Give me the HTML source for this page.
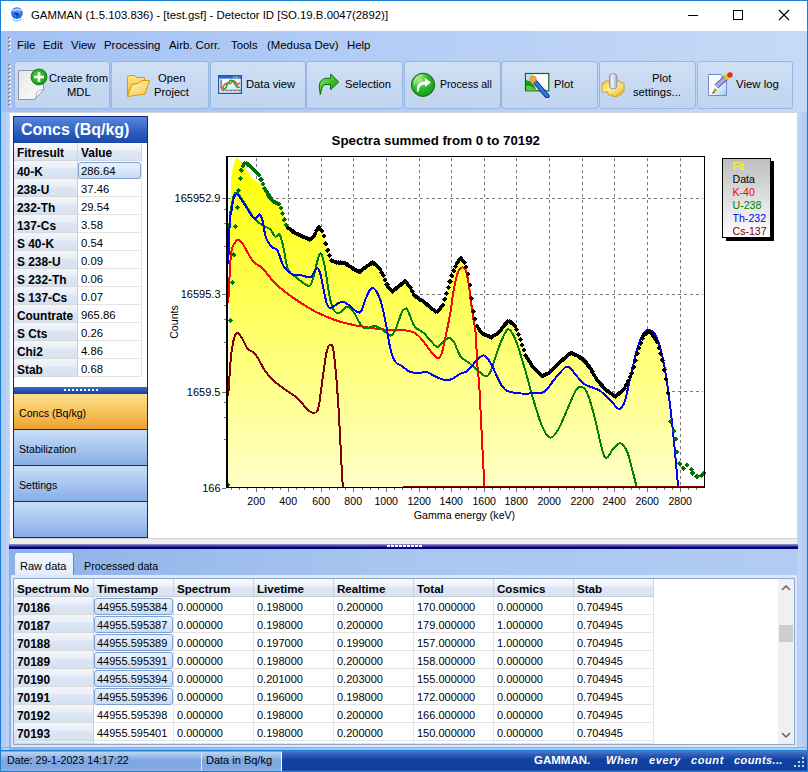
<!DOCTYPE html>
<html><head><meta charset="utf-8"><style>
*{box-sizing:border-box;margin:0;padding:0}
html,body{width:808px;height:772px;overflow:hidden;background:#fff}
body{position:relative;font-family:"Liberation Sans", sans-serif;color:#000}
.a{position:absolute}
.t{position:absolute;white-space:nowrap;line-height:1}
</style></head><body>
<!-- window frame -->
<div class="a" style="left:0;top:0;width:808px;height:772px;background:#1A7ED4"></div>
<div class="a" style="left:1px;top:1px;width:806px;height:30px;background:#fff"></div>
<!-- menu + toolbar bg -->
<div class="a" style="left:1px;top:31px;width:806px;height:81px;background:linear-gradient(90deg,#A3C1F4,#C6DAF7)"></div>

<svg class="a" style="left:10px;top:7px" width="14" height="15" viewBox="0 0 14 15">
<defs><radialGradient id="gl" cx="0.5" cy="0.45" r="0.6"><stop offset="0" stop-color="#7AB8FF"/><stop offset="0.6" stop-color="#2A78F0"/><stop offset="1" stop-color="#0C50D8"/></radialGradient></defs>
<circle cx="6.9" cy="6.1" r="5.8" fill="url(#gl)"/>
<path d="M2.5,4 Q7,0.5 11.5,4" stroke="#DDEEFF" stroke-width="1.3" fill="none" opacity="0.9"/>
<path d="M4,5.5 L7.5,5.5 L9,7.5 L7.5,10.5 L6.5,8 L4.5,7.5 Z" fill="#0A2FA0"/>
<path d="M2,12 Q7,15.8 12,12" stroke="#9CCCF8" stroke-width="1.5" fill="none"/>
</svg>
<div class="t" style="left:31px;top:10px;font-size:11.4px;color:#000">GAMMAN (1.5.103.836) - [test.gsf] - Detector ID [SO.19.B.0047(2892)]</div>
<div class="a" style="left:688px;top:15px;width:10px;height:1px;background:#000"></div>
<div class="a" style="left:733px;top:10px;width:10px;height:10px;border:1px solid #000"></div>
<svg class="a" style="left:778px;top:9px" width="12" height="12"><path d="M1,1 L11,11 M11,1 L1,11" stroke="#000" stroke-width="1.1"/></svg>

<div class="a" style="left:8px;top:37px;width:2px;height:2px;background:#9A9288;box-shadow:1px 1px 0 #fff"></div><div class="a" style="left:8px;top:41px;width:2px;height:2px;background:#9A9288;box-shadow:1px 1px 0 #fff"></div><div class="a" style="left:8px;top:45px;width:2px;height:2px;background:#9A9288;box-shadow:1px 1px 0 #fff"></div><div class="a" style="left:8px;top:49px;width:2px;height:2px;background:#9A9288;box-shadow:1px 1px 0 #fff"></div>
<div class="t" style="left:17px;top:40px;font-size:11.4px">File</div>
<div class="t" style="left:43px;top:40px;font-size:11.4px">Edit</div>
<div class="t" style="left:71px;top:40px;font-size:11.4px">View</div>
<div class="t" style="left:104px;top:40px;font-size:11.4px">Processing</div>
<div class="t" style="left:169px;top:40px;font-size:11.4px">Airb. Corr.</div>
<div class="t" style="left:231px;top:40px;font-size:11.4px">Tools</div>
<div class="t" style="left:267px;top:40px;font-size:11.4px">(Medusa Dev)</div>
<div class="t" style="left:347px;top:40px;font-size:11.4px">Help</div>
<div class="a" style="left:8px;top:64px;width:2px;height:2px;background:#9A9288;box-shadow:1px 1px 0 #fff"></div><div class="a" style="left:8px;top:68px;width:2px;height:2px;background:#9A9288;box-shadow:1px 1px 0 #fff"></div><div class="a" style="left:8px;top:72px;width:2px;height:2px;background:#9A9288;box-shadow:1px 1px 0 #fff"></div><div class="a" style="left:8px;top:76px;width:2px;height:2px;background:#9A9288;box-shadow:1px 1px 0 #fff"></div><div class="a" style="left:8px;top:80px;width:2px;height:2px;background:#9A9288;box-shadow:1px 1px 0 #fff"></div><div class="a" style="left:8px;top:84px;width:2px;height:2px;background:#9A9288;box-shadow:1px 1px 0 #fff"></div><div class="a" style="left:8px;top:88px;width:2px;height:2px;background:#9A9288;box-shadow:1px 1px 0 #fff"></div><div class="a" style="left:8px;top:92px;width:2px;height:2px;background:#9A9288;box-shadow:1px 1px 0 #fff"></div><div class="a" style="left:8px;top:96px;width:2px;height:2px;background:#9A9288;box-shadow:1px 1px 0 #fff"></div><div class="a" style="left:8px;top:100px;width:2px;height:2px;background:#9A9288;box-shadow:1px 1px 0 #fff"></div><div class="a" style="left:8px;top:104px;width:2px;height:2px;background:#9A9288;box-shadow:1px 1px 0 #fff"></div>
<div class="a" style="left:14px;top:61px;width:96px;height:48px;border:1px solid #98B6E2;border-radius:3px;background:linear-gradient(#CFE0F4,#C6D9F2 50%,#C2D5F0)"></div>
<div class="a" style="left:111px;top:61px;width:98px;height:48px;border:1px solid #98B6E2;border-radius:3px;background:linear-gradient(#CFE0F4,#C6D9F2 50%,#C2D5F0)"></div>
<div class="a" style="left:210px;top:61px;width:96px;height:48px;border:1px solid #98B6E2;border-radius:3px;background:linear-gradient(#CFE0F4,#C6D9F2 50%,#C2D5F0)"></div>
<div class="a" style="left:306px;top:61px;width:97px;height:48px;border:1px solid #98B6E2;border-radius:3px;background:linear-gradient(#CFE0F4,#C6D9F2 50%,#C2D5F0)"></div>
<div class="a" style="left:404px;top:61px;width:97px;height:48px;border:1px solid #98B6E2;border-radius:3px;background:linear-gradient(#CFE0F4,#C6D9F2 50%,#C2D5F0)"></div>
<div class="a" style="left:501px;top:61px;width:97px;height:48px;border:1px solid #98B6E2;border-radius:3px;background:linear-gradient(#CFE0F4,#C6D9F2 50%,#C2D5F0)"></div>
<div class="a" style="left:599px;top:61px;width:97px;height:48px;border:1px solid #98B6E2;border-radius:3px;background:linear-gradient(#CFE0F4,#C6D9F2 50%,#C2D5F0)"></div>
<div class="a" style="left:697px;top:61px;width:96px;height:48px;border:1px solid #98B6E2;border-radius:3px;background:linear-gradient(#CFE0F4,#C6D9F2 50%,#C2D5F0)"></div>

<svg class="a" style="left:17px;top:66px" width="32" height="36" viewBox="0 0 32 36">
<defs><linearGradient id="pg" x1="0" y1="0" x2="1" y2="1"><stop offset="0" stop-color="#E6E6E6"/><stop offset="1" stop-color="#FFFFFF"/></linearGradient>
<radialGradient id="gc" cx="0.45" cy="0.45" r="0.6"><stop offset="0" stop-color="#6AE050"/><stop offset="0.7" stop-color="#1EAA1E"/><stop offset="1" stop-color="#0C8A0C"/></radialGradient></defs>
<path d="M1.5,4.5 L26.5,4.5 L26.5,24 L17.5,33.5 L1.5,33.5 Z" fill="url(#pg)" stroke="#8894A8" stroke-width="1"/>
<path d="M26.5,24 Q22,22.5 19.5,27 Q20,30 17.5,33.5 Z" fill="#FAFAFA" stroke="#9098A8" stroke-width="0.8"/>
<circle cx="22" cy="11" r="8" fill="url(#gc)" stroke="#0A7A0A" stroke-width="0.8"/>
<path d="M22,6 L22,16 M17,11 L27,11" stroke="#fff" stroke-width="2.4"/>
</svg>
<div class="t" style="left:49px;top:73px;font-size:11.2px">Create from</div>
<div class="t" style="left:67px;top:87px;font-size:11.2px">MDL</div>

<svg class="a" style="left:125px;top:73px" width="27" height="25" viewBox="0 0 27 25">
<defs><linearGradient id="fo" x1="0" y1="0" x2="1" y2="1"><stop offset="0" stop-color="#FFF6B8"/><stop offset="1" stop-color="#F4C850"/></linearGradient>
<linearGradient id="fob" x1="0" y1="0" x2="0" y2="1"><stop offset="0" stop-color="#FFE680"/><stop offset="1" stop-color="#F0B848"/></linearGradient></defs>
<path d="M2.5,23 L2.5,4.5 Q2.5,2.5 4.5,2.5 L9.5,2.5 L11.5,4.5 L19.5,4.5 L19.5,9 L7,11.5 Z" fill="url(#fob)" stroke="#DC9A08" stroke-width="1"/>
<path d="M2.5,23.5 L7,11.5 Q13,11.5 17,7.5 L24.5,7.5 L20,21 Z" fill="url(#fo)" stroke="#DC9A08" stroke-width="1"/>
</svg>
<div class="t" style="left:158px;top:73px;font-size:11.2px">Open</div>
<div class="t" style="left:154px;top:87px;font-size:11.2px">Project</div>

<svg class="a" style="left:218px;top:75px" width="24" height="19" viewBox="0 0 24 19">
<defs><linearGradient id="dv" x1="0" y1="0" x2="1" y2="1"><stop offset="0" stop-color="#FFFFFF"/><stop offset="1" stop-color="#CDE6FA"/></linearGradient></defs>
<rect x="0.6" y="0.6" width="22.8" height="17.8" fill="url(#dv)" stroke="#2450B0" stroke-width="1.2"/>
<rect x="1" y="1" width="22" height="2.6" fill="#2C66C8"/>
<rect x="15.5" y="1.4" width="1.4" height="1.8" fill="#9CC8F0"/><rect x="18" y="1.4" width="1.4" height="1.8" fill="#9CC8F0"/><rect x="20.5" y="1.4" width="1.4" height="1.8" fill="#F06030"/>
<path d="M3.3,4.5 L3.3,15.2 L23,15.2" stroke="#707070" stroke-width="1" fill="none"/>
<path d="M2,6 L3.3,6 M2,8 L3.3,8 M2,10 L3.3,10 M2,12 L3.3,12 M5,15.2 L5,16.5 M9,15.2 L9,16.5 M13,15.2 L13,16.5 M17,15.2 L17,16.5 M21,15.2 L21,16.5" stroke="#606060" stroke-width="0.9"/>
<path d="M4.3,14 Q6,9 8,8.5 L12.6,8.5 Q14,6 16.2,6 L19.8,9.7 L21.7,7.7" stroke="#F04A20" stroke-width="1.4" fill="none"/>
<path d="M5,14.4 L8,12.8 Q9,9 10,8 L12.6,5.3 L14.6,5.7 L19,12 L21.7,12.4" stroke="#10A020" stroke-width="1.4" fill="none"/>
</svg>
<div class="t" style="left:246px;top:79px;font-size:11.2px">Data view</div>

<svg class="a" style="left:317px;top:73px" width="23" height="23" viewBox="0 0 23 23">
<defs><linearGradient id="ag" x1="0" y1="0" x2="1" y2="1"><stop offset="0" stop-color="#90F070"/><stop offset="0.5" stop-color="#40C030"/><stop offset="1" stop-color="#159015"/></linearGradient></defs>
<path d="M3.3,21.5 L2.2,13 Q3,6 9.3,5.2 L13.7,5.2 L13.7,1.1 L21.7,8.9 L13.7,16.7 L13.5,11.5 L8.1,11.5 Q5,12.5 4.8,15.6 Z" fill="url(#ag)" stroke="#0A6A0A" stroke-width="1"/>
</svg>
<div class="t" style="left:345px;top:79px;font-size:11.2px">Selection</div>

<svg class="a" style="left:410px;top:72px" width="26" height="26" viewBox="0 0 26 26">
<defs><radialGradient id="pa" cx="0.35" cy="0.3" r="0.8"><stop offset="0" stop-color="#A8F090"/><stop offset="0.5" stop-color="#2CB82C"/><stop offset="1" stop-color="#169A16"/></radialGradient></defs>
<circle cx="13" cy="12.8" r="11.6" fill="url(#pa)" stroke="#0A640A" stroke-width="1"/>
<path d="M4.5,12 Q5,4 13,3" stroke="#D8F8C8" stroke-width="1.2" fill="none" opacity="0.8"/>
<path d="M6.8,19.5 Q5.5,10 15,9.5 L15,6 L21,10.5 L15,15 L15,12.5 Q9,12 8.8,19.5 Z" fill="#fff"/>
</svg>
<div class="t" style="left:440px;top:79px;font-size:10.6px">Process all</div>

<svg class="a" style="left:524px;top:72px" width="26" height="26" viewBox="0 0 26 26">
<defs><linearGradient id="sh" x1="0" y1="0" x2="1" y2="0"><stop offset="0" stop-color="#FFFFFF"/><stop offset="0.6" stop-color="#FFFFFF"/><stop offset="1" stop-color="#B8B8B8"/></linearGradient></defs>
<rect x="1.5" y="1.5" width="23.3" height="17.3" fill="#fff" stroke="#0A6A1A" stroke-width="1.2"/>
<path d="M2,2 L10,2 L7,9 L2,8 Z" fill="#B8E2FA"/>
<path d="M2,18.5 L2,8 Q9,9 13,18.5 Z" fill="#14961A"/>
<path d="M2,18.5 L2,14 Q8,13 13,18.5 Z" fill="#64C234"/>
<path d="M14,6 Q20,10 22,18 L17,18 Z" fill="url(#sh)" opacity="0.6"/>
<path d="M12,11 L23,24" stroke="#0A2A9A" stroke-width="5" stroke-linecap="round"/>
<path d="M12,11 L23,24" stroke="#3A78E0" stroke-width="2.8" stroke-linecap="round"/>
<circle cx="9" cy="7.2" r="3.3" fill="#F4A838" stroke="#D88010" stroke-width="0.6"/>
</svg>
<div class="t" style="left:554px;top:79px;font-size:11.2px">Plot</div>

<svg class="a" style="left:601px;top:72px" width="24" height="26" viewBox="0 0 24 26">
<defs><linearGradient id="cy" x1="0" y1="0" x2="1" y2="0"><stop offset="0" stop-color="#B8B8B8"/><stop offset="0.35" stop-color="#F4F4F4"/><stop offset="1" stop-color="#A8A8D0"/></linearGradient>
<linearGradient id="ge" x1="0" y1="0" x2="1" y2="1"><stop offset="0" stop-color="#F0C830"/><stop offset="0.45" stop-color="#FFF0A0"/><stop offset="1" stop-color="#E8B010"/></linearGradient></defs>
<path d="M4,9 L19,9 L19,11 L23,11 L23,20 L20,20 L20,23 L16,23 L16,24.5 L12,24.5 L12,23 L7,23 L7,20 L1,20 L1,11 L4,11 Z" fill="url(#ge)" stroke="#D0A010" stroke-width="0.9"/>
<rect x="8.5" y="1.5" width="7.5" height="15.5" rx="3.6" fill="url(#cy)" stroke="#8A8A8A" stroke-width="0.8"/>
</svg>
<div class="t" style="left:652px;top:73px;font-size:11.2px">Plot</div>
<div class="t" style="left:633px;top:87px;font-size:11.2px">settings...</div>

<svg class="a" style="left:707px;top:72px" width="27" height="26" viewBox="0 0 27 26">
<defs><linearGradient id="vl" x1="0" y1="0" x2="1" y2="1"><stop offset="0" stop-color="#FFFFFF"/><stop offset="0.5" stop-color="#F4FAFF"/><stop offset="1" stop-color="#90CCF0"/></linearGradient></defs>
<path d="M1.5,2.5 L14,2.5 L19.5,8 L19.5,23.5 L1.5,23.5 Z" fill="url(#vl)" stroke="#7A88D0" stroke-width="1"/>
<path d="M14,2.5 L14,8 L19.5,8 Z" fill="#80C8F0"/>
<path d="M9.4,14.2 L19.4,5.5" stroke="#505090" stroke-width="5.4" stroke-linecap="butt"/>
<path d="M9.4,14.2 L19.4,5.5" stroke="#A8A8E8" stroke-width="3.6" stroke-linecap="butt"/>
<path d="M5.5,21.5 L7.5,16 L10.5,18.5 Z" fill="#D89810"/>
<path d="M5.2,21.8 L6.2,19.5 L7.8,20.8 Z" fill="#202020"/>
<path d="M18.2,6.5 L21.8,3.3" stroke="#F0C010" stroke-width="5"/>
<circle cx="23" cy="2.9" r="2.7" fill="#E03010"/>
</svg>
<div class="t" style="left:736px;top:79px;font-size:11.4px">View log</div>


<div class="a" style="left:1px;top:112px;width:9px;height:638px;background:linear-gradient(90deg,#AFC9F4,#C0D6F7)"></div>
<div class="a" style="left:798px;top:112px;width:9px;height:638px;background:linear-gradient(90deg,#C0D6F7,#AFC9F4)"></div>
<div class="a" style="left:9px;top:112px;width:789px;height:432px;background:#fff;border-top:1px solid #D8D8D8;border-left:1px solid #D8D8D8;border-right:1px solid #D8D8D8"></div>
<div class="a" style="left:10px;top:538px;width:787px;height:6px;background:#EEEEEE;border-top:1px solid #D0D0D0"></div>

<svg width="808" height="772" style="position:absolute;left:0;top:0"><defs><linearGradient id="yg" gradientUnits="userSpaceOnUse" x1="0" y1="157" x2="0" y2="487"><stop offset="0" stop-color="#FFFF00"/><stop offset="1" stop-color="#FFFFC8"/></linearGradient><linearGradient id="lg" x1="0" y1="0" x2="0" y2="1"><stop offset="0" stop-color="#BEBEBE"/><stop offset="1" stop-color="#FFFFFF"/></linearGradient></defs><path d="M256.5,158 L256.5,486 M288.5,158 L288.5,486 M321.5,158 L321.5,486 M353.5,158 L353.5,486 M386.5,158 L386.5,486 M419.5,158 L419.5,486 M451.5,158 L451.5,486 M484.5,158 L484.5,486 M516.5,158 L516.5,486 M549.5,158 L549.5,486 M582.5,158 L582.5,486 M614.5,158 L614.5,486 M647.5,158 L647.5,486 M680.5,158 L680.5,486 M228,198.5 L703,198.5 M228,294.5 L703,294.5 M228,391.5 L703,391.5" stroke="#787878" stroke-width="1" stroke-dasharray="3,3" fill="none"/><path d="M227.5,487.0 C227.6,475.8 227.8,446.2 228.0,420.0 C228.2,393.8 228.7,361.7 229.0,330.0 C229.3,298.3 229.6,255.0 230.0,230.0 C230.4,205.0 230.7,190.7 231.3,180.0 C231.9,169.3 232.7,169.6 233.5,166.0 C234.3,162.4 235.2,159.7 236.0,158.5 C236.8,157.3 237.3,157.9 238.5,159.0 C239.7,160.1 241.5,163.0 243.0,165.0 C244.5,167.0 245.8,168.8 247.3,171.0 C248.8,173.2 250.1,176.0 252.0,178.0 C253.9,180.0 257.0,181.2 259.0,183.0 C261.0,184.8 262.1,186.5 264.0,189.0 C265.9,191.5 268.6,195.7 270.6,198.0 C272.6,200.3 274.4,201.7 276.0,203.0 C277.6,204.3 278.8,204.5 280.0,206.0 C281.2,207.5 281.8,209.0 283.0,212.0 C284.2,215.0 285.2,220.6 287.0,224.0 C288.8,227.4 290.9,230.2 294.0,232.5 C297.1,234.8 302.9,236.2 305.6,237.5 C308.3,238.8 308.6,240.2 310.0,240.0 C311.4,239.8 312.6,238.2 314.0,236.0 C315.4,233.8 317.0,227.7 318.5,227.0 C320.0,226.3 321.6,228.7 323.0,232.0 C324.4,235.3 325.3,242.2 326.6,247.0 C327.9,251.8 329.4,257.9 331.0,260.5 C332.6,263.1 333.8,262.0 336.0,262.4 C338.2,262.8 341.0,261.9 344.0,263.0 C347.0,264.1 351.4,267.5 354.0,269.0 C356.6,270.5 357.5,272.3 359.5,272.0 C361.5,271.7 363.8,268.6 366.0,267.0 C368.2,265.4 370.3,262.2 372.6,262.5 C374.9,262.8 377.7,266.1 379.6,268.5 C381.5,270.9 382.6,273.9 384.0,277.0 C385.4,280.1 386.6,284.6 388.0,287.0 C389.4,289.4 390.7,291.5 392.4,291.5 C394.1,291.5 395.9,288.8 398.0,287.0 C400.1,285.2 403.0,281.0 405.0,281.0 C407.0,281.0 408.4,284.5 410.0,287.0 C411.6,289.5 412.3,293.5 414.6,296.0 C416.9,298.5 421.3,300.0 424.0,302.0 C426.7,304.0 428.9,306.2 431.0,308.0 C433.1,309.8 434.8,312.9 436.7,312.5 C438.6,312.1 440.9,309.0 442.6,305.5 C444.3,302.0 445.4,296.6 447.0,291.5 C448.6,286.4 450.4,279.6 452.0,275.0 C453.6,270.4 455.2,266.4 456.6,263.6 C458.1,260.8 459.2,258.0 460.7,258.0 C462.1,258.0 463.9,260.4 465.3,263.6 C466.7,266.9 467.9,272.4 468.8,277.5 C469.8,282.6 470.2,288.2 471.0,294.0 C471.8,299.8 472.5,307.2 473.5,312.5 C474.5,317.8 475.6,322.5 477.0,326.0 C478.4,329.5 479.3,331.4 481.6,333.3 C483.9,335.2 488.3,337.5 491.0,337.5 C493.7,337.5 495.1,336.1 498.0,333.3 C500.9,330.5 505.5,321.7 508.4,320.5 C511.3,319.3 513.2,322.6 515.4,326.3 C517.5,330.0 519.5,337.6 521.3,342.6 C523.1,347.7 524.0,352.5 526.0,356.6 C528.0,360.7 530.3,363.7 533.0,367.0 C535.7,370.3 539.5,375.4 542.2,376.4 C544.9,377.4 546.5,375.1 549.2,373.0 C551.9,370.9 555.1,366.9 558.6,363.6 C562.1,360.3 567.1,354.4 570.0,353.0 C572.9,351.6 573.8,354.0 576.0,355.0 C578.2,356.0 580.7,356.8 583.0,359.0 C585.3,361.2 587.7,364.5 590.0,368.0 C592.3,371.5 594.3,376.3 597.0,380.0 C599.7,383.7 603.2,387.6 606.3,390.4 C609.4,393.2 612.5,397.1 615.6,396.7 C618.7,396.3 622.3,391.9 625.0,388.0 C627.7,384.1 629.9,379.0 632.0,373.0 C634.1,367.0 635.8,358.2 637.7,352.0 C639.6,345.8 641.7,339.1 643.6,335.6 C645.5,332.1 647.3,330.2 649.4,331.0 C651.5,331.8 654.3,335.6 656.4,340.3 C658.5,345.0 660.4,351.6 662.2,359.0 C664.0,366.4 665.8,376.4 667.0,384.6 C668.2,392.8 668.0,398.8 669.2,408.0 C670.4,417.2 672.6,428.3 674.0,440.0 C675.4,451.7 676.5,470.2 677.3,478.0 C678.0,485.8 678.3,485.5 678.5,487.0 Z" fill="url(#yg)"/><path d="M228.2,303.0 C228.7,294.9 229.9,264.1 231.0,254.2 C232.1,244.3 233.3,246.1 234.5,243.7 C235.7,241.3 236.7,239.8 238.0,239.8 C239.3,239.8 240.1,240.1 242.6,243.7 C245.1,247.3 249.7,257.1 253.0,261.2 C256.3,265.3 259.2,264.9 262.5,268.2 C265.8,271.5 269.3,277.1 273.0,281.0 C276.7,284.9 279.9,287.8 284.6,291.5 C289.3,295.2 295.6,299.5 301.0,303.0 C306.4,306.5 310.7,309.4 317.2,312.5 C323.7,315.6 332.3,319.3 340.0,321.7 C347.7,324.1 355.5,325.4 363.3,326.8 C371.1,328.2 378.8,329.1 386.6,329.8 C394.4,330.5 404.6,329.8 410.0,331.0 C415.4,332.2 416.2,333.9 419.3,336.8 C422.4,339.7 425.7,345.0 428.6,348.5 C431.5,352.0 434.6,356.8 436.7,357.8 C438.8,358.8 439.7,358.9 441.4,354.3 C443.1,349.7 445.5,337.1 447.0,330.0 C448.5,322.9 449.5,318.0 450.5,312.0 C451.5,306.0 452.0,299.8 453.0,294.0 C454.0,288.2 455.5,281.0 456.5,277.0 C457.5,273.0 458.1,271.6 459.0,270.0 C459.9,268.4 461.0,267.7 462.0,267.5 C463.0,267.3 464.0,266.9 465.0,269.0 C466.0,271.1 467.0,274.3 468.0,280.0 C469.0,285.7 470.3,296.6 471.2,303.2 C472.1,309.8 472.7,314.4 473.5,319.5 C474.3,324.6 475.2,327.2 475.8,334.0 C476.4,340.8 476.4,350.7 477.0,360.0 C477.6,369.3 478.7,376.7 479.5,390.0 C480.3,403.3 481.2,423.8 482.0,440.0 C482.8,456.2 484.1,479.2 484.5,487.0" stroke="#FF0000" stroke-width="2" fill="none" stroke-linejoin="round" shape-rendering="crispEdges"/><path d="M228.5,245.0 C228.8,240.0 229.4,222.0 230.0,215.0 C230.6,208.0 231.6,206.1 232.2,203.0 C232.8,199.9 232.4,197.9 233.3,196.3 C234.2,194.7 235.2,191.3 237.5,193.2 C239.8,195.1 244.6,203.5 247.3,207.6 C250.1,211.7 252.1,215.5 254.0,218.0 C255.9,220.5 257.3,221.5 259.0,222.8 C260.7,224.1 262.1,224.8 264.0,226.0 C265.9,227.2 268.7,228.0 270.6,229.8 C272.5,231.6 273.8,236.0 275.3,236.8 C276.8,237.6 278.1,232.7 279.5,234.4 C280.9,236.1 282.0,241.4 283.4,247.2 C284.8,253.0 285.9,264.3 288.0,269.4 C290.1,274.4 293.0,274.8 296.3,277.5 C299.6,280.2 305.3,285.3 308.0,285.7 C310.7,286.1 310.7,285.2 312.6,280.0 C314.5,274.8 317.7,256.9 319.6,254.2 C321.5,251.5 322.5,256.2 324.2,263.6 C325.9,271.0 328.2,290.6 330.0,298.5 C331.8,306.4 333.0,309.0 334.7,311.3 C336.4,313.6 337.9,313.3 340.0,312.5 C342.1,311.7 344.7,306.7 347.0,306.7 C349.3,306.7 351.3,309.0 354.0,312.5 C356.7,316.0 359.8,325.4 363.3,327.6 C366.8,329.9 371.5,325.4 375.0,326.0 C378.5,326.6 381.8,329.6 384.3,331.2 C386.8,332.8 388.4,335.6 390.1,335.6 C391.9,335.6 392.9,334.9 394.8,331.0 C396.8,327.1 400.1,316.0 401.8,312.3 C403.6,308.6 404.3,309.4 405.3,309.0 C406.3,308.6 406.1,307.1 407.6,310.0 C409.2,312.9 411.9,322.4 414.6,326.3 C417.3,330.2 420.5,330.0 424.0,333.3 C427.5,336.6 432.9,344.2 435.6,346.1 C438.3,348.1 438.1,346.4 440.2,345.0 C442.3,343.6 446.1,338.4 448.4,338.0 C450.7,337.6 452.1,339.5 454.2,342.6 C456.2,345.7 458.1,353.1 460.7,356.6 C463.3,360.1 466.9,361.1 470.0,363.6 C473.1,366.1 476.6,369.7 479.3,371.8 C482.0,373.9 484.4,376.6 486.3,376.4 C488.2,376.2 489.1,375.1 491.0,370.6 C492.9,366.1 495.7,355.8 498.0,349.6 C500.3,343.4 503.1,336.6 505.0,333.3 C506.9,330.0 507.7,328.2 509.6,329.8 C511.5,331.4 513.9,335.4 516.6,342.6 C519.3,349.8 523.3,363.7 526.0,373.0 C528.7,382.3 530.3,389.7 533.0,398.6 C535.7,407.5 539.3,420.0 542.2,426.5 C545.1,433.0 547.7,437.3 550.4,437.7 C553.1,438.1 555.7,433.9 558.6,428.9 C561.5,423.9 565.0,414.3 567.9,407.9 C570.8,401.5 573.7,393.9 576.0,390.4 C578.3,386.9 579.9,386.3 581.8,386.9 C583.7,387.5 585.5,388.8 587.6,393.9 C589.7,398.9 592.3,408.3 594.6,417.2 C596.9,426.1 599.7,440.7 601.6,447.5 C603.5,454.3 604.3,457.8 606.3,458.0 C608.2,458.2 611.0,451.1 613.3,448.6 C615.6,446.2 618.0,442.7 620.3,443.3 C622.6,443.9 625.2,447.2 627.3,452.1 C629.4,457.1 631.5,467.2 633.1,473.0 C634.7,478.8 636.0,484.7 636.6,487.0" stroke="#008000" stroke-width="2" fill="none" stroke-linejoin="round" shape-rendering="crispEdges"/><path d="M228.2,264.0 C228.5,256.9 229.3,230.3 229.8,221.6 C230.3,212.9 230.6,215.9 231.3,212.0 C232.0,208.1 232.8,201.2 233.8,198.3 C234.8,195.4 235.7,193.6 237.5,194.7 C239.3,195.8 242.1,200.8 244.7,204.6 C247.3,208.4 251.0,215.3 253.0,217.5 C255.0,219.7 255.6,218.5 256.6,218.0 C257.6,217.5 258.2,214.0 259.2,214.4 C260.2,214.8 261.4,216.5 262.5,220.4 C263.6,224.3 264.4,233.6 266.0,238.0 C267.6,242.4 269.9,244.9 271.8,247.0 C273.7,249.1 275.7,247.5 277.6,250.7 C279.5,253.8 281.1,262.0 283.4,265.9 C285.7,269.8 288.7,272.4 291.6,274.0 C294.5,275.6 297.9,274.6 301.0,275.2 C304.1,275.8 308.1,277.9 310.2,277.5 C312.3,277.1 312.5,274.6 313.7,273.0 C314.9,271.4 316.0,267.4 317.2,267.8 C318.4,268.2 319.1,269.3 320.7,275.2 C322.3,281.1 324.9,297.6 326.6,303.0 C328.4,308.4 329.3,307.8 331.2,307.8 C333.1,307.8 336.1,304.2 338.2,303.2 C340.3,302.2 342.1,301.6 344.0,302.0 C345.9,302.4 346.7,303.8 349.3,305.5 C351.9,307.2 357.1,313.6 359.8,312.5 C362.5,311.4 363.9,302.8 365.6,299.0 C367.4,295.2 368.7,291.1 370.3,289.5 C371.9,287.9 373.2,287.5 375.0,289.5 C376.8,291.5 379.1,296.1 380.8,301.5 C382.6,306.9 383.9,314.2 385.5,321.8 C387.1,329.4 388.6,340.7 390.1,347.3 C391.7,353.9 392.9,358.2 394.8,361.3 C396.8,364.4 399.3,364.2 401.8,366.0 C404.3,367.8 407.1,370.6 410.0,371.8 C412.9,373.0 416.6,373.0 419.3,373.0 C422.0,373.0 423.9,371.4 426.2,371.8 C428.5,372.2 430.5,374.0 433.2,375.3 C435.9,376.6 439.7,378.8 442.6,379.5 C445.5,380.2 447.8,380.4 450.7,379.5 C453.6,378.6 457.2,375.5 460.0,374.0 C462.8,372.5 464.9,372.9 467.7,370.6 C470.5,368.3 474.3,362.5 477.0,360.0 C479.7,357.5 481.7,354.9 484.0,355.5 C486.3,356.1 487.9,358.4 491.0,363.6 C494.1,368.8 498.7,382.0 502.6,386.9 C506.5,391.8 509.2,391.7 514.3,392.8 C519.4,393.9 528.0,393.6 533.0,393.4 C538.0,393.2 541.1,393.8 544.6,391.6 C548.1,389.4 550.4,384.1 553.9,380.0 C557.4,375.9 562.7,368.9 565.6,367.1 C568.5,365.3 569.7,368.0 571.4,369.4 C573.1,370.8 573.7,372.7 576.0,375.2 C578.3,377.7 581.4,382.1 585.3,384.6 C589.2,387.1 595.0,387.7 599.3,390.4 C603.6,393.1 607.7,397.8 611.0,400.9 C614.3,404.0 616.8,409.0 619.1,409.0 C621.4,409.0 623.0,406.5 624.9,400.9 C626.8,395.3 628.7,384.1 630.8,375.2 C632.9,366.3 635.6,354.3 637.7,347.3 C639.8,340.3 641.7,336.2 643.6,333.3 C645.5,330.4 647.3,329.2 649.4,329.8 C651.5,330.4 654.1,331.6 656.4,336.8 C658.7,342.1 661.3,351.0 663.4,361.3 C665.5,371.6 667.5,385.3 669.2,398.5 C671.0,411.7 672.5,427.3 673.9,440.5 C675.2,453.7 676.5,470.1 677.3,477.8 C678.1,485.6 678.3,485.5 678.5,487.0" stroke="#0000FF" stroke-width="2" fill="none" stroke-linejoin="round" shape-rendering="crispEdges"/><path d="M228.2,396.2 C228.7,389.6 229.9,366.5 231.0,356.6 C232.1,346.7 233.3,340.7 234.5,336.8 C235.7,332.9 236.7,332.9 238.0,333.3 C239.3,333.7 241.0,336.5 242.6,339.0 C244.2,341.5 245.4,346.2 247.3,348.5 C249.2,350.8 252.4,351.1 254.3,353.0 C256.2,354.9 257.2,357.1 259.0,360.0 C260.8,362.9 262.5,367.3 264.8,370.6 C267.1,373.9 269.7,376.9 273.0,380.0 C276.3,383.1 280.9,386.6 284.6,389.3 C288.3,392.0 292.3,394.1 295.0,396.2 C297.7,398.3 298.9,399.7 301.0,402.0 C303.1,404.3 305.8,408.4 307.9,410.2 C310.0,412.0 311.9,413.0 313.7,412.6 C315.4,412.2 316.8,414.2 318.4,408.0 C319.9,401.8 321.6,384.6 323.0,375.3 C324.4,366.0 325.4,357.1 326.6,352.0 C327.8,346.9 328.8,345.0 330.0,345.0 C331.2,345.0 332.2,342.3 333.6,352.0 C335.0,361.7 336.9,383.8 338.2,403.2 C339.5,422.6 340.9,454.5 341.7,468.5 C342.5,482.5 342.7,483.9 342.9,487.0" stroke="#800000" stroke-width="2" fill="none" stroke-linejoin="round" shape-rendering="crispEdges"/><path d="M227.8,482.4l2.6,2.6l-2.6,2.6l-2.6,-2.6zM230.5,317.8l2.6,2.6l-2.6,2.6l-2.6,-2.6zM232.5,280.0l2.6,2.6l-2.6,2.6l-2.6,-2.6zM233.8,252.1l2.6,2.6l-2.6,2.6l-2.6,-2.6zM235.4,223.7l2.6,2.6l-2.6,2.6l-2.6,-2.6zM237.3,204.9l2.6,2.6l-2.6,2.6l-2.6,-2.6zM238.5,187.7l2.6,2.6l-2.6,2.6l-2.6,-2.6zM240.6,175.8l2.6,2.6l-2.6,2.6l-2.6,-2.6zM241.1,167.8l2.6,2.6l-2.6,2.6l-2.6,-2.6zM243.0,163.5l2.6,2.6l-2.6,2.6l-2.6,-2.6zM244.8,161.0l2.6,2.6l-2.6,2.6l-2.6,-2.6zM246.6,160.7l2.6,2.6l-2.6,2.6l-2.6,-2.6zM248.4,162.3l2.6,2.6l-2.6,2.6l-2.6,-2.6zM250.2,163.9l2.6,2.6l-2.6,2.6l-2.6,-2.6zM252.0,165.7l2.6,2.6l-2.6,2.6l-2.6,-2.6zM253.8,167.6l2.6,2.6l-2.6,2.6l-2.6,-2.6zM255.6,169.3l2.6,2.6l-2.6,2.6l-2.6,-2.6zM257.4,170.9l2.6,2.6l-2.6,2.6l-2.6,-2.6zM259.2,172.4l2.6,2.6l-2.6,2.6l-2.6,-2.6zM261.0,176.9l2.6,2.6l-2.6,2.6l-2.6,-2.6zM262.8,181.4l2.6,2.6l-2.6,2.6l-2.6,-2.6zM264.6,185.9l2.6,2.6l-2.6,2.6l-2.6,-2.6zM266.4,189.1l2.6,2.6l-2.6,2.6l-2.6,-2.6zM268.2,192.2l2.6,2.6l-2.6,2.6l-2.6,-2.6zM270.0,194.9l2.6,2.6l-2.6,2.6l-2.6,-2.6zM271.8,196.9l2.6,2.6l-2.6,2.6l-2.6,-2.6zM273.6,198.8l2.6,2.6l-2.6,2.6l-2.6,-2.6zM275.4,199.8l2.6,2.6l-2.6,2.6l-2.6,-2.6zM277.2,200.7l2.6,2.6l-2.6,2.6l-2.6,-2.6zM279.0,201.8l2.6,2.6l-2.6,2.6l-2.6,-2.6zM280.8,205.4l2.6,2.6l-2.6,2.6l-2.6,-2.6zM282.6,210.9l2.6,2.6l-2.6,2.6l-2.6,-2.6zM284.4,217.3l2.6,2.6l-2.6,2.6l-2.6,-2.6zM286.2,222.4l2.6,2.6l-2.6,2.6l-2.6,-2.6zM670.4,419.2l2.6,2.6l-2.6,2.6l-2.6,-2.6zM673.9,428.4l2.6,2.6l-2.6,2.6l-2.6,-2.6zM676.0,436.4l2.6,2.6l-2.6,2.6l-2.6,-2.6zM677.3,449.4l2.6,2.6l-2.6,2.6l-2.6,-2.6zM679.7,461.2l2.6,2.6l-2.6,2.6l-2.6,-2.6zM683.2,465.8l2.6,2.6l-2.6,2.6l-2.6,-2.6zM686.7,462.4l2.6,2.6l-2.6,2.6l-2.6,-2.6zM691.3,467.0l2.6,2.6l-2.6,2.6l-2.6,-2.6zM692.5,470.4l2.6,2.6l-2.6,2.6l-2.6,-2.6zM697.0,474.0l2.6,2.6l-2.6,2.6l-2.6,-2.6zM701.8,472.8l2.6,2.6l-2.6,2.6l-2.6,-2.6zM703.7,470.4l2.6,2.6l-2.6,2.6l-2.6,-2.6z" fill="#007000" shape-rendering="crispEdges"/><path d="M288.0,225.2l2.6,2.6l-2.6,2.6l-2.6,-2.6zM289.8,226.6l2.6,2.6l-2.6,2.6l-2.6,-2.6zM291.6,228.0l2.6,2.6l-2.6,2.6l-2.6,-2.6zM293.4,229.4l2.6,2.6l-2.6,2.6l-2.6,-2.6zM295.2,230.4l2.6,2.6l-2.6,2.6l-2.6,-2.6zM297.0,231.2l2.6,2.6l-2.6,2.6l-2.6,-2.6zM298.8,232.0l2.6,2.6l-2.6,2.6l-2.6,-2.6zM300.6,232.7l2.6,2.6l-2.6,2.6l-2.6,-2.6zM302.4,233.5l2.6,2.6l-2.6,2.6l-2.6,-2.6zM304.2,234.3l2.6,2.6l-2.6,2.6l-2.6,-2.6zM306.0,235.1l2.6,2.6l-2.6,2.6l-2.6,-2.6zM307.8,236.2l2.6,2.6l-2.6,2.6l-2.6,-2.6zM309.6,237.2l2.6,2.6l-2.6,2.6l-2.6,-2.6zM311.4,236.0l2.6,2.6l-2.6,2.6l-2.6,-2.6zM313.2,234.2l2.6,2.6l-2.6,2.6l-2.6,-2.6zM315.0,231.4l2.6,2.6l-2.6,2.6l-2.6,-2.6zM316.8,227.8l2.6,2.6l-2.6,2.6l-2.6,-2.6zM318.6,224.5l2.6,2.6l-2.6,2.6l-2.6,-2.6zM320.4,226.5l2.6,2.6l-2.6,2.6l-2.6,-2.6zM322.2,228.5l2.6,2.6l-2.6,2.6l-2.6,-2.6zM324.0,233.6l2.6,2.6l-2.6,2.6l-2.6,-2.6zM325.8,241.1l2.6,2.6l-2.6,2.6l-2.6,-2.6zM327.6,247.5l2.6,2.6l-2.6,2.6l-2.6,-2.6zM329.4,253.0l2.6,2.6l-2.6,2.6l-2.6,-2.6zM331.2,258.0l2.6,2.6l-2.6,2.6l-2.6,-2.6zM333.0,258.7l2.6,2.6l-2.6,2.6l-2.6,-2.6zM334.8,259.3l2.6,2.6l-2.6,2.6l-2.6,-2.6zM336.6,259.8l2.6,2.6l-2.6,2.6l-2.6,-2.6zM338.4,260.0l2.6,2.6l-2.6,2.6l-2.6,-2.6zM340.2,260.1l2.6,2.6l-2.6,2.6l-2.6,-2.6zM342.0,260.2l2.6,2.6l-2.6,2.6l-2.6,-2.6zM343.8,260.4l2.6,2.6l-2.6,2.6l-2.6,-2.6zM345.6,261.4l2.6,2.6l-2.6,2.6l-2.6,-2.6zM347.4,262.4l2.6,2.6l-2.6,2.6l-2.6,-2.6zM349.2,263.5l2.6,2.6l-2.6,2.6l-2.6,-2.6zM351.0,264.6l2.6,2.6l-2.6,2.6l-2.6,-2.6zM352.8,265.7l2.6,2.6l-2.6,2.6l-2.6,-2.6zM354.6,266.7l2.6,2.6l-2.6,2.6l-2.6,-2.6zM356.4,267.7l2.6,2.6l-2.6,2.6l-2.6,-2.6zM358.2,268.7l2.6,2.6l-2.6,2.6l-2.6,-2.6zM360.0,269.0l2.6,2.6l-2.6,2.6l-2.6,-2.6zM361.8,267.6l2.6,2.6l-2.6,2.6l-2.6,-2.6zM363.6,266.2l2.6,2.6l-2.6,2.6l-2.6,-2.6zM365.4,264.9l2.6,2.6l-2.6,2.6l-2.6,-2.6zM367.2,263.6l2.6,2.6l-2.6,2.6l-2.6,-2.6zM369.0,262.4l2.6,2.6l-2.6,2.6l-2.6,-2.6zM370.8,261.1l2.6,2.6l-2.6,2.6l-2.6,-2.6zM372.6,259.9l2.6,2.6l-2.6,2.6l-2.6,-2.6zM374.4,261.4l2.6,2.6l-2.6,2.6l-2.6,-2.6zM376.2,263.0l2.6,2.6l-2.6,2.6l-2.6,-2.6zM378.0,264.5l2.6,2.6l-2.6,2.6l-2.6,-2.6zM379.8,266.3l2.6,2.6l-2.6,2.6l-2.6,-2.6zM381.6,269.8l2.6,2.6l-2.6,2.6l-2.6,-2.6zM383.4,273.2l2.6,2.6l-2.6,2.6l-2.6,-2.6zM385.2,277.4l2.6,2.6l-2.6,2.6l-2.6,-2.6zM387.0,281.9l2.6,2.6l-2.6,2.6l-2.6,-2.6zM388.8,285.2l2.6,2.6l-2.6,2.6l-2.6,-2.6zM390.6,287.1l2.6,2.6l-2.6,2.6l-2.6,-2.6zM392.4,288.9l2.6,2.6l-2.6,2.6l-2.6,-2.6zM394.2,287.5l2.6,2.6l-2.6,2.6l-2.6,-2.6zM396.0,286.0l2.6,2.6l-2.6,2.6l-2.6,-2.6zM397.8,284.6l2.6,2.6l-2.6,2.6l-2.6,-2.6zM399.6,283.0l2.6,2.6l-2.6,2.6l-2.6,-2.6zM401.4,281.5l2.6,2.6l-2.6,2.6l-2.6,-2.6zM403.2,279.9l2.6,2.6l-2.6,2.6l-2.6,-2.6zM405.0,278.4l2.6,2.6l-2.6,2.6l-2.6,-2.6zM406.8,280.6l2.6,2.6l-2.6,2.6l-2.6,-2.6zM408.6,282.7l2.6,2.6l-2.6,2.6l-2.6,-2.6zM410.4,285.2l2.6,2.6l-2.6,2.6l-2.6,-2.6zM412.2,288.7l2.6,2.6l-2.6,2.6l-2.6,-2.6zM414.0,292.2l2.6,2.6l-2.6,2.6l-2.6,-2.6zM415.8,294.2l2.6,2.6l-2.6,2.6l-2.6,-2.6zM417.6,295.3l2.6,2.6l-2.6,2.6l-2.6,-2.6zM419.4,296.5l2.6,2.6l-2.6,2.6l-2.6,-2.6zM421.2,297.6l2.6,2.6l-2.6,2.6l-2.6,-2.6zM423.0,298.8l2.6,2.6l-2.6,2.6l-2.6,-2.6zM424.8,300.1l2.6,2.6l-2.6,2.6l-2.6,-2.6zM426.6,301.6l2.6,2.6l-2.6,2.6l-2.6,-2.6zM428.4,303.2l2.6,2.6l-2.6,2.6l-2.6,-2.6zM430.2,304.7l2.6,2.6l-2.6,2.6l-2.6,-2.6zM432.0,306.2l2.6,2.6l-2.6,2.6l-2.6,-2.6zM433.8,307.6l2.6,2.6l-2.6,2.6l-2.6,-2.6zM435.6,309.0l2.6,2.6l-2.6,2.6l-2.6,-2.6zM437.4,309.1l2.6,2.6l-2.6,2.6l-2.6,-2.6zM439.2,306.9l2.6,2.6l-2.6,2.6l-2.6,-2.6zM441.0,304.8l2.6,2.6l-2.6,2.6l-2.6,-2.6zM442.8,302.3l2.6,2.6l-2.6,2.6l-2.6,-2.6zM444.6,296.5l2.6,2.6l-2.6,2.6l-2.6,-2.6zM446.4,290.8l2.6,2.6l-2.6,2.6l-2.6,-2.6zM448.2,284.9l2.6,2.6l-2.6,2.6l-2.6,-2.6zM450.0,279.0l2.6,2.6l-2.6,2.6l-2.6,-2.6zM451.8,273.1l2.6,2.6l-2.6,2.6l-2.6,-2.6zM453.6,268.4l2.6,2.6l-2.6,2.6l-2.6,-2.6zM455.4,264.0l2.6,2.6l-2.6,2.6l-2.6,-2.6zM457.2,260.2l2.6,2.6l-2.6,2.6l-2.6,-2.6zM459.0,257.7l2.6,2.6l-2.6,2.6l-2.6,-2.6zM460.8,255.5l2.6,2.6l-2.6,2.6l-2.6,-2.6zM462.6,257.7l2.6,2.6l-2.6,2.6l-2.6,-2.6zM464.4,259.9l2.6,2.6l-2.6,2.6l-2.6,-2.6zM466.2,264.6l2.6,2.6l-2.6,2.6l-2.6,-2.6zM468.0,271.7l2.6,2.6l-2.6,2.6l-2.6,-2.6zM469.8,282.4l2.6,2.6l-2.6,2.6l-2.6,-2.6zM471.6,295.8l2.6,2.6l-2.6,2.6l-2.6,-2.6zM473.4,309.2l2.6,2.6l-2.6,2.6l-2.6,-2.6zM475.2,316.5l2.6,2.6l-2.6,2.6l-2.6,-2.6zM477.0,323.4l2.6,2.6l-2.6,2.6l-2.6,-2.6zM478.8,326.3l2.6,2.6l-2.6,2.6l-2.6,-2.6zM480.6,329.1l2.6,2.6l-2.6,2.6l-2.6,-2.6zM482.4,331.1l2.6,2.6l-2.6,2.6l-2.6,-2.6zM484.2,331.9l2.6,2.6l-2.6,2.6l-2.6,-2.6zM486.0,332.7l2.6,2.6l-2.6,2.6l-2.6,-2.6zM487.8,333.5l2.6,2.6l-2.6,2.6l-2.6,-2.6zM489.6,334.3l2.6,2.6l-2.6,2.6l-2.6,-2.6zM491.4,334.7l2.6,2.6l-2.6,2.6l-2.6,-2.6zM493.2,333.6l2.6,2.6l-2.6,2.6l-2.6,-2.6zM495.0,332.5l2.6,2.6l-2.6,2.6l-2.6,-2.6zM496.8,331.4l2.6,2.6l-2.6,2.6l-2.6,-2.6zM498.6,330.0l2.6,2.6l-2.6,2.6l-2.6,-2.6zM500.4,327.7l2.6,2.6l-2.6,2.6l-2.6,-2.6zM502.2,325.5l2.6,2.6l-2.6,2.6l-2.6,-2.6zM504.0,323.3l2.6,2.6l-2.6,2.6l-2.6,-2.6zM505.8,321.1l2.6,2.6l-2.6,2.6l-2.6,-2.6zM507.6,318.9l2.6,2.6l-2.6,2.6l-2.6,-2.6zM509.4,318.7l2.6,2.6l-2.6,2.6l-2.6,-2.6zM511.2,320.2l2.6,2.6l-2.6,2.6l-2.6,-2.6zM513.0,321.7l2.6,2.6l-2.6,2.6l-2.6,-2.6zM514.8,323.2l2.6,2.6l-2.6,2.6l-2.6,-2.6zM516.6,327.0l2.6,2.6l-2.6,2.6l-2.6,-2.6zM518.4,332.0l2.6,2.6l-2.6,2.6l-2.6,-2.6zM520.2,337.0l2.6,2.6l-2.6,2.6l-2.6,-2.6zM522.0,342.1l2.6,2.6l-2.6,2.6l-2.6,-2.6zM523.8,347.4l2.6,2.6l-2.6,2.6l-2.6,-2.6zM525.6,352.8l2.6,2.6l-2.6,2.6l-2.6,-2.6zM527.4,356.1l2.6,2.6l-2.6,2.6l-2.6,-2.6zM529.2,358.8l2.6,2.6l-2.6,2.6l-2.6,-2.6zM531.0,361.4l2.6,2.6l-2.6,2.6l-2.6,-2.6zM532.8,364.1l2.6,2.6l-2.6,2.6l-2.6,-2.6zM534.6,366.0l2.6,2.6l-2.6,2.6l-2.6,-2.6zM536.4,367.9l2.6,2.6l-2.6,2.6l-2.6,-2.6zM538.2,369.7l2.6,2.6l-2.6,2.6l-2.6,-2.6zM540.0,371.6l2.6,2.6l-2.6,2.6l-2.6,-2.6zM541.8,373.4l2.6,2.6l-2.6,2.6l-2.6,-2.6zM543.6,373.1l2.6,2.6l-2.6,2.6l-2.6,-2.6zM545.4,372.2l2.6,2.6l-2.6,2.6l-2.6,-2.6zM547.2,371.4l2.6,2.6l-2.6,2.6l-2.6,-2.6zM549.0,370.5l2.6,2.6l-2.6,2.6l-2.6,-2.6zM550.8,368.8l2.6,2.6l-2.6,2.6l-2.6,-2.6zM552.6,367.0l2.6,2.6l-2.6,2.6l-2.6,-2.6zM554.4,365.2l2.6,2.6l-2.6,2.6l-2.6,-2.6zM556.2,363.4l2.6,2.6l-2.6,2.6l-2.6,-2.6zM558.0,361.6l2.6,2.6l-2.6,2.6l-2.6,-2.6zM559.8,359.9l2.6,2.6l-2.6,2.6l-2.6,-2.6zM561.6,358.2l2.6,2.6l-2.6,2.6l-2.6,-2.6zM563.4,356.5l2.6,2.6l-2.6,2.6l-2.6,-2.6zM565.2,354.9l2.6,2.6l-2.6,2.6l-2.6,-2.6zM567.0,353.2l2.6,2.6l-2.6,2.6l-2.6,-2.6zM568.8,351.5l2.6,2.6l-2.6,2.6l-2.6,-2.6zM570.6,350.6l2.6,2.6l-2.6,2.6l-2.6,-2.6zM572.4,351.2l2.6,2.6l-2.6,2.6l-2.6,-2.6zM574.2,351.8l2.6,2.6l-2.6,2.6l-2.6,-2.6zM576.0,352.4l2.6,2.6l-2.6,2.6l-2.6,-2.6zM577.8,353.4l2.6,2.6l-2.6,2.6l-2.6,-2.6zM579.6,354.5l2.6,2.6l-2.6,2.6l-2.6,-2.6zM581.4,355.5l2.6,2.6l-2.6,2.6l-2.6,-2.6zM583.2,356.7l2.6,2.6l-2.6,2.6l-2.6,-2.6zM585.0,359.0l2.6,2.6l-2.6,2.6l-2.6,-2.6zM586.8,361.3l2.6,2.6l-2.6,2.6l-2.6,-2.6zM588.6,363.6l2.6,2.6l-2.6,2.6l-2.6,-2.6zM590.4,366.1l2.6,2.6l-2.6,2.6l-2.6,-2.6zM592.2,369.2l2.6,2.6l-2.6,2.6l-2.6,-2.6zM594.0,372.3l2.6,2.6l-2.6,2.6l-2.6,-2.6zM595.8,375.3l2.6,2.6l-2.6,2.6l-2.6,-2.6zM597.6,378.1l2.6,2.6l-2.6,2.6l-2.6,-2.6zM599.4,380.1l2.6,2.6l-2.6,2.6l-2.6,-2.6zM601.2,382.1l2.6,2.6l-2.6,2.6l-2.6,-2.6zM603.0,384.1l2.6,2.6l-2.6,2.6l-2.6,-2.6zM604.8,386.1l2.6,2.6l-2.6,2.6l-2.6,-2.6zM606.6,388.0l2.6,2.6l-2.6,2.6l-2.6,-2.6zM608.4,389.2l2.6,2.6l-2.6,2.6l-2.6,-2.6zM610.2,390.4l2.6,2.6l-2.6,2.6l-2.6,-2.6zM612.0,391.7l2.6,2.6l-2.6,2.6l-2.6,-2.6zM613.8,392.9l2.6,2.6l-2.6,2.6l-2.6,-2.6zM615.6,394.1l2.6,2.6l-2.6,2.6l-2.6,-2.6zM617.4,392.4l2.6,2.6l-2.6,2.6l-2.6,-2.6zM619.2,390.8l2.6,2.6l-2.6,2.6l-2.6,-2.6zM621.0,389.1l2.6,2.6l-2.6,2.6l-2.6,-2.6zM622.8,387.4l2.6,2.6l-2.6,2.6l-2.6,-2.6zM624.6,385.8l2.6,2.6l-2.6,2.6l-2.6,-2.6zM626.4,382.4l2.6,2.6l-2.6,2.6l-2.6,-2.6zM628.2,378.5l2.6,2.6l-2.6,2.6l-2.6,-2.6zM630.0,374.7l2.6,2.6l-2.6,2.6l-2.6,-2.6zM631.8,370.8l2.6,2.6l-2.6,2.6l-2.6,-2.6zM633.6,364.5l2.6,2.6l-2.6,2.6l-2.6,-2.6zM635.4,357.9l2.6,2.6l-2.6,2.6l-2.6,-2.6zM637.2,351.2l2.6,2.6l-2.6,2.6l-2.6,-2.6zM639.0,345.8l2.6,2.6l-2.6,2.6l-2.6,-2.6zM640.8,340.8l2.6,2.6l-2.6,2.6l-2.6,-2.6zM642.6,335.8l2.6,2.6l-2.6,2.6l-2.6,-2.6zM644.4,332.4l2.6,2.6l-2.6,2.6l-2.6,-2.6zM646.2,330.9l2.6,2.6l-2.6,2.6l-2.6,-2.6zM648.0,329.5l2.6,2.6l-2.6,2.6l-2.6,-2.6zM649.8,328.9l2.6,2.6l-2.6,2.6l-2.6,-2.6zM651.6,331.3l2.6,2.6l-2.6,2.6l-2.6,-2.6zM653.4,333.7l2.6,2.6l-2.6,2.6l-2.6,-2.6zM655.2,336.1l2.6,2.6l-2.6,2.6l-2.6,-2.6zM657.0,339.6l2.6,2.6l-2.6,2.6l-2.6,-2.6zM658.8,345.4l2.6,2.6l-2.6,2.6l-2.6,-2.6zM660.6,351.2l2.6,2.6l-2.6,2.6l-2.6,-2.6zM662.4,357.5l2.6,2.6l-2.6,2.6l-2.6,-2.6zM664.2,367.1l2.6,2.6l-2.6,2.6l-2.6,-2.6zM666.0,376.7l2.6,2.6l-2.6,2.6l-2.6,-2.6zM667.8,390.5l2.6,2.6l-2.6,2.6l-2.6,-2.6z" fill="#000000" shape-rendering="crispEdges"/><path d="M403,486.5 L704,486.5" stroke="#800000" stroke-width="1"/><path d="M227,156 L227,488" stroke="#000" stroke-width="2" fill="none"/><path d="M226,156.5 L705,156.5 M704.5,156 L704.5,488 M226,487.5 L705,487.5" stroke="#000" stroke-width="1" fill="none"/><path d="M222,198.5 L226,198.5 M222,294.5 L226,294.5 M222,392.5 L226,392.5 M222,488.5 L226,488.5 M224,209.5 L226,209.5 M224,223.5 L226,223.5 M224,246.5 L226,246.5 M224,305.5 L226,305.5 M224,319.5 L226,319.5 M224,342.5 L226,342.5 M224,402.5 L226,402.5 M224,417.5 L226,417.5 M224,439.5 L226,439.5 M231.5,488 L231.5,490 M239.5,488 L239.5,490 M247.5,488 L247.5,490 M256.5,488 L256.5,492 M264.5,488 L264.5,490 M272.5,488 L272.5,490 M280.5,488 L280.5,490 M288.5,488 L288.5,492 M296.5,488 L296.5,490 M304.5,488 L304.5,490 M313.5,488 L313.5,490 M321.5,488 L321.5,492 M329.5,488 L329.5,490 M337.5,488 L337.5,490 M345.5,488 L345.5,490 M353.5,488 L353.5,492 M362.5,488 L362.5,490 M370.5,488 L370.5,490 M378.5,488 L378.5,490 M386.5,488 L386.5,492 M394.5,488 L394.5,490 M402.5,488 L402.5,490 M411.5,488 L411.5,490 M419.5,488 L419.5,492 M427.5,488 L427.5,490 M435.5,488 L435.5,490 M443.5,488 L443.5,490 M451.5,488 L451.5,492 M460.5,488 L460.5,490 M468.5,488 L468.5,490 M476.5,488 L476.5,490 M484.5,488 L484.5,492 M492.5,488 L492.5,490 M500.5,488 L500.5,490 M509.5,488 L509.5,490 M516.5,488 L516.5,492 M525.5,488 L525.5,490 M533.5,488 L533.5,490 M541.5,488 L541.5,490 M549.5,488 L549.5,492 M558.5,488 L558.5,490 M566.5,488 L566.5,490 M574.5,488 L574.5,490 M582.5,488 L582.5,492 M590.5,488 L590.5,490 M598.5,488 L598.5,490 M607.5,488 L607.5,490 M614.5,488 L614.5,492 M623.5,488 L623.5,490 M631.5,488 L631.5,490 M639.5,488 L639.5,490 M647.5,488 L647.5,492 M656.5,488 L656.5,490 M664.5,488 L664.5,490 M672.5,488 L672.5,490 M680.5,488 L680.5,492 M688.5,488 L688.5,490 M696.5,488 L696.5,490" stroke="#707070" stroke-width="1" fill="none"/><text x="220.5" y="202.3" text-anchor="end" style="font-family:'Liberation Sans',sans-serif;font-size:10.6px;fill:#000;font-size:11px">165952.9</text><text x="220.5" y="298.3" text-anchor="end" style="font-family:'Liberation Sans',sans-serif;font-size:10.6px;fill:#000;font-size:11px">16595.3</text><text x="220.5" y="395.5" text-anchor="end" style="font-family:'Liberation Sans',sans-serif;font-size:10.6px;fill:#000;font-size:11px">1659.5</text><text x="220.5" y="491.5" text-anchor="end" style="font-family:'Liberation Sans',sans-serif;font-size:10.6px;fill:#000;font-size:11px">166</text><text x="256.2" y="505" text-anchor="middle" style="font-family:'Liberation Sans',sans-serif;font-size:10.6px;fill:#000">200</text><text x="288.2" y="505" text-anchor="middle" style="font-family:'Liberation Sans',sans-serif;font-size:10.6px;fill:#000">400</text><text x="321.2" y="505" text-anchor="middle" style="font-family:'Liberation Sans',sans-serif;font-size:10.6px;fill:#000">600</text><text x="353.2" y="505" text-anchor="middle" style="font-family:'Liberation Sans',sans-serif;font-size:10.6px;fill:#000">800</text><text x="386.2" y="505" text-anchor="middle" style="font-family:'Liberation Sans',sans-serif;font-size:10.6px;fill:#000">1000</text><text x="419.2" y="505" text-anchor="middle" style="font-family:'Liberation Sans',sans-serif;font-size:10.6px;fill:#000">1200</text><text x="451.2" y="505" text-anchor="middle" style="font-family:'Liberation Sans',sans-serif;font-size:10.6px;fill:#000">1400</text><text x="484.2" y="505" text-anchor="middle" style="font-family:'Liberation Sans',sans-serif;font-size:10.6px;fill:#000">1600</text><text x="516.2" y="505" text-anchor="middle" style="font-family:'Liberation Sans',sans-serif;font-size:10.6px;fill:#000">1800</text><text x="549.2" y="505" text-anchor="middle" style="font-family:'Liberation Sans',sans-serif;font-size:10.6px;fill:#000">2000</text><text x="582.2" y="505" text-anchor="middle" style="font-family:'Liberation Sans',sans-serif;font-size:10.6px;fill:#000">2200</text><text x="614.2" y="505" text-anchor="middle" style="font-family:'Liberation Sans',sans-serif;font-size:10.6px;fill:#000">2400</text><text x="647.2" y="505" text-anchor="middle" style="font-family:'Liberation Sans',sans-serif;font-size:10.6px;fill:#000">2600</text><text x="680.2" y="505" text-anchor="middle" style="font-family:'Liberation Sans',sans-serif;font-size:10.6px;fill:#000">2800</text><text x="464.5" y="519" text-anchor="middle" style="font-family:'Liberation Sans',sans-serif;font-size:10.6px;fill:#000">Gamma energy (keV)</text><text x="0" y="0" transform="translate(178,322) rotate(-90)" text-anchor="middle" style="font-family:'Liberation Sans',sans-serif;font-size:10.6px;fill:#000">Counts</text><text x="435.8" y="144.6" text-anchor="middle" style="font-family:'Liberation Sans',sans-serif;font-size:13.3px;font-weight:bold;fill:#000">Spectra summed from 0 to 70192</text><rect x="726" y="161" width="48" height="80" fill="#000"/><rect x="722.5" y="158.5" width="48" height="79" fill="url(#lg)" stroke="#000" stroke-width="1"/><text x="732.5" y="169.8" style="font-family:'Liberation Sans',sans-serif;font-size:10.6px;fill:#FFFF00">Fit</text><text x="732.5" y="182.8" style="font-family:'Liberation Sans',sans-serif;font-size:10.6px;fill:#000000">Data</text><text x="732.5" y="195.8" style="font-family:'Liberation Sans',sans-serif;font-size:10.6px;fill:#FF0000">K-40</text><text x="732.5" y="208.8" style="font-family:'Liberation Sans',sans-serif;font-size:10.6px;fill:#008000">U-238</text><text x="732.5" y="221.8" style="font-family:'Liberation Sans',sans-serif;font-size:10.6px;fill:#0000FF">Th-232</text><text x="732.5" y="234.8" style="font-family:'Liberation Sans',sans-serif;font-size:10.6px;fill:#800000">Cs-137</text></svg>
<div class="a" style="left:13px;top:116px;width:135px;height:422px;border:1px solid #0A2A8A;background:#fff"></div><div class="a" style="left:14px;top:117px;width:133px;height:26px;background:linear-gradient(#5A88DA,#2A5CC0 60%,#1A48A8)"></div><div class="t" style="left:21px;top:122px;font-size:16px;font-weight:bold;color:#fff">Concs (Bq/kg)</div><div class="a" style="left:14px;top:143px;width:64px;height:18px;background:linear-gradient(#F8FAFD,#EEF3FA 40%,#DFE7F4 50%,#D9E3F1);border-right:1px solid #D4D8E0;border-bottom:1px solid #D0D4DC"></div><div class="a" style="left:78px;top:143px;width:64px;height:18px;background:linear-gradient(#F8FAFD,#EEF3FA 40%,#DFE7F4 50%,#D9E3F1);border-right:1px solid #D0D4DC;border-bottom:1px solid #D0D4DC"></div><div class="t" style="left:17px;top:148px;font-size:11.9px;font-weight:bold">Fitresult</div><div class="t" style="left:81px;top:148px;font-size:11.9px;font-weight:bold">Value</div><div class="a" style="left:14px;top:161px;width:64px;height:18px;background:linear-gradient(#F2F6FC,#E8EEF8 42%,#DCE6F4 50%,#D6E1F2);border-right:1px solid #C8D0DC;border-bottom:1px solid #D8D8D8"></div><div class="a" style="left:78px;top:161px;width:64px;height:18px;border-right:1px solid #E4E4E4;border-bottom:1px solid #E4E4E4;background:#fff"></div><div class="t" style="left:17px;top:167px;font-size:11.9px;font-weight:bold">40-K</div><div class="t" style="left:81px;top:166px;font-size:11.3px">286.64</div><div class="a" style="left:14px;top:179px;width:64px;height:18px;background:linear-gradient(#F2F6FC,#E8EEF8 42%,#DCE6F4 50%,#D6E1F2);border-right:1px solid #C8D0DC;border-bottom:1px solid #D8D8D8"></div><div class="a" style="left:78px;top:179px;width:64px;height:18px;border-right:1px solid #E4E4E4;border-bottom:1px solid #E4E4E4;background:#fff"></div><div class="t" style="left:17px;top:185px;font-size:11.9px;font-weight:bold">238-U</div><div class="t" style="left:81px;top:184px;font-size:11.3px">37.46</div><div class="a" style="left:14px;top:197px;width:64px;height:18px;background:linear-gradient(#F2F6FC,#E8EEF8 42%,#DCE6F4 50%,#D6E1F2);border-right:1px solid #C8D0DC;border-bottom:1px solid #D8D8D8"></div><div class="a" style="left:78px;top:197px;width:64px;height:18px;border-right:1px solid #E4E4E4;border-bottom:1px solid #E4E4E4;background:#fff"></div><div class="t" style="left:17px;top:203px;font-size:11.9px;font-weight:bold">232-Th</div><div class="t" style="left:81px;top:202px;font-size:11.3px">29.54</div><div class="a" style="left:14px;top:215px;width:64px;height:18px;background:linear-gradient(#F2F6FC,#E8EEF8 42%,#DCE6F4 50%,#D6E1F2);border-right:1px solid #C8D0DC;border-bottom:1px solid #D8D8D8"></div><div class="a" style="left:78px;top:215px;width:64px;height:18px;border-right:1px solid #E4E4E4;border-bottom:1px solid #E4E4E4;background:#fff"></div><div class="t" style="left:17px;top:221px;font-size:11.9px;font-weight:bold">137-Cs</div><div class="t" style="left:81px;top:220px;font-size:11.3px">3.58</div><div class="a" style="left:14px;top:233px;width:64px;height:18px;background:linear-gradient(#F2F6FC,#E8EEF8 42%,#DCE6F4 50%,#D6E1F2);border-right:1px solid #C8D0DC;border-bottom:1px solid #D8D8D8"></div><div class="a" style="left:78px;top:233px;width:64px;height:18px;border-right:1px solid #E4E4E4;border-bottom:1px solid #E4E4E4;background:#fff"></div><div class="t" style="left:17px;top:239px;font-size:11.9px;font-weight:bold">S 40-K</div><div class="t" style="left:81px;top:238px;font-size:11.3px">0.54</div><div class="a" style="left:14px;top:251px;width:64px;height:18px;background:linear-gradient(#F2F6FC,#E8EEF8 42%,#DCE6F4 50%,#D6E1F2);border-right:1px solid #C8D0DC;border-bottom:1px solid #D8D8D8"></div><div class="a" style="left:78px;top:251px;width:64px;height:18px;border-right:1px solid #E4E4E4;border-bottom:1px solid #E4E4E4;background:#fff"></div><div class="t" style="left:17px;top:257px;font-size:11.9px;font-weight:bold">S 238-U</div><div class="t" style="left:81px;top:256px;font-size:11.3px">0.09</div><div class="a" style="left:14px;top:269px;width:64px;height:18px;background:linear-gradient(#F2F6FC,#E8EEF8 42%,#DCE6F4 50%,#D6E1F2);border-right:1px solid #C8D0DC;border-bottom:1px solid #D8D8D8"></div><div class="a" style="left:78px;top:269px;width:64px;height:18px;border-right:1px solid #E4E4E4;border-bottom:1px solid #E4E4E4;background:#fff"></div><div class="t" style="left:17px;top:275px;font-size:11.9px;font-weight:bold">S 232-Th</div><div class="t" style="left:81px;top:274px;font-size:11.3px">0.06</div><div class="a" style="left:14px;top:287px;width:64px;height:18px;background:linear-gradient(#F2F6FC,#E8EEF8 42%,#DCE6F4 50%,#D6E1F2);border-right:1px solid #C8D0DC;border-bottom:1px solid #D8D8D8"></div><div class="a" style="left:78px;top:287px;width:64px;height:18px;border-right:1px solid #E4E4E4;border-bottom:1px solid #E4E4E4;background:#fff"></div><div class="t" style="left:17px;top:293px;font-size:11.9px;font-weight:bold">S 137-Cs</div><div class="t" style="left:81px;top:292px;font-size:11.3px">0.07</div><div class="a" style="left:14px;top:305px;width:64px;height:18px;background:linear-gradient(#F2F6FC,#E8EEF8 42%,#DCE6F4 50%,#D6E1F2);border-right:1px solid #C8D0DC;border-bottom:1px solid #D8D8D8"></div><div class="a" style="left:78px;top:305px;width:64px;height:18px;border-right:1px solid #E4E4E4;border-bottom:1px solid #E4E4E4;background:#fff"></div><div class="t" style="left:17px;top:311px;font-size:11.9px;font-weight:bold">Countrate</div><div class="t" style="left:81px;top:310px;font-size:11.3px">965.86</div><div class="a" style="left:14px;top:323px;width:64px;height:18px;background:linear-gradient(#F2F6FC,#E8EEF8 42%,#DCE6F4 50%,#D6E1F2);border-right:1px solid #C8D0DC;border-bottom:1px solid #D8D8D8"></div><div class="a" style="left:78px;top:323px;width:64px;height:18px;border-right:1px solid #E4E4E4;border-bottom:1px solid #E4E4E4;background:#fff"></div><div class="t" style="left:17px;top:329px;font-size:11.9px;font-weight:bold">S Cts</div><div class="t" style="left:81px;top:328px;font-size:11.3px">0.26</div><div class="a" style="left:14px;top:341px;width:64px;height:18px;background:linear-gradient(#F2F6FC,#E8EEF8 42%,#DCE6F4 50%,#D6E1F2);border-right:1px solid #C8D0DC;border-bottom:1px solid #D8D8D8"></div><div class="a" style="left:78px;top:341px;width:64px;height:18px;border-right:1px solid #E4E4E4;border-bottom:1px solid #E4E4E4;background:#fff"></div><div class="t" style="left:17px;top:347px;font-size:11.9px;font-weight:bold">Chi2</div><div class="t" style="left:81px;top:346px;font-size:11.3px">4.86</div><div class="a" style="left:14px;top:359px;width:64px;height:18px;background:linear-gradient(#F2F6FC,#E8EEF8 42%,#DCE6F4 50%,#D6E1F2);border-right:1px solid #C8D0DC;border-bottom:1px solid #D8D8D8"></div><div class="a" style="left:78px;top:359px;width:64px;height:18px;border-right:1px solid #E4E4E4;border-bottom:1px solid #E4E4E4;background:#fff"></div><div class="t" style="left:17px;top:365px;font-size:11.9px;font-weight:bold">Stab</div><div class="t" style="left:81px;top:364px;font-size:11.3px">0.68</div><div class="a" style="left:78px;top:162px;width:63px;height:17px;border:1px solid #7FA0D0;border-radius:3px;background:linear-gradient(#EAF2FD,#C6DCF7)"></div><div class="t" style="left:81px;top:166px;font-size:11.3px">286.64</div><div class="a" style="left:14px;top:387px;width:133px;height:7px;background:linear-gradient(#3A6CC8,#1040A0)"></div><div class="a" style="left:64px;top:389px;width:2px;height:2px;background:#fff"></div><div class="a" style="left:68px;top:389px;width:2px;height:2px;background:#fff"></div><div class="a" style="left:72px;top:389px;width:2px;height:2px;background:#fff"></div><div class="a" style="left:76px;top:389px;width:2px;height:2px;background:#fff"></div><div class="a" style="left:80px;top:389px;width:2px;height:2px;background:#fff"></div><div class="a" style="left:84px;top:389px;width:2px;height:2px;background:#fff"></div><div class="a" style="left:88px;top:389px;width:2px;height:2px;background:#fff"></div><div class="a" style="left:92px;top:389px;width:2px;height:2px;background:#fff"></div><div class="a" style="left:96px;top:389px;width:2px;height:2px;background:#fff"></div><div class="a" style="left:14px;top:394px;width:133px;height:36px;background:linear-gradient(#FADF90,#F8C860 45%,#F0A030);border-bottom:1px solid #0A2A8A"></div><div class="t" style="left:19px;top:408px;font-size:10.6px">Concs (Bq/kg)</div><div class="a" style="left:14px;top:430px;width:133px;height:36px;background:linear-gradient(#C8DDF8,#A8C6F0 50%,#88AEE6);border-bottom:1px solid #0A2A8A"></div><div class="t" style="left:19px;top:444px;font-size:10.6px">Stabilization</div><div class="a" style="left:14px;top:466px;width:133px;height:36px;background:linear-gradient(#C8DDF8,#A8C6F0 50%,#88AEE6);border-bottom:1px solid #0A2A8A"></div><div class="t" style="left:19px;top:480px;font-size:10.6px">Settings</div><div class="a" style="left:14px;top:502px;width:133px;height:36px;background:linear-gradient(#C8DDF8,#A8C6F0 50%,#88AEE6);border-bottom:1px solid #0A2A8A"></div>
<div class="a" style="left:9px;top:544px;width:789px;height:5px;background:linear-gradient(#9A9ACC,#000080 70%)"></div><div class="a" style="left:387px;top:545px;width:3px;height:2px;background:#fff"></div><div class="a" style="left:391px;top:545px;width:3px;height:2px;background:#fff"></div><div class="a" style="left:395px;top:545px;width:3px;height:2px;background:#fff"></div><div class="a" style="left:399px;top:545px;width:3px;height:2px;background:#fff"></div><div class="a" style="left:403px;top:545px;width:3px;height:2px;background:#fff"></div><div class="a" style="left:407px;top:545px;width:3px;height:2px;background:#fff"></div><div class="a" style="left:411px;top:545px;width:3px;height:2px;background:#fff"></div><div class="a" style="left:415px;top:545px;width:3px;height:2px;background:#fff"></div><div class="a" style="left:419px;top:545px;width:3px;height:2px;background:#fff"></div><div class="a" style="left:9px;top:549px;width:789px;height:201px;background:linear-gradient(90deg,#8FB1E8,#A8C6F0 50%,#B0CCF2)"></div><div class="a" style="left:15px;top:553px;width:59px;height:23px;border-radius:3px 3px 0 0;background:linear-gradient(#F2F6FD,#E2ECFA);border-right:1px solid #6A8AC0"></div><div class="t" style="left:20px;top:561px;font-size:11px">Raw data</div><div class="t" style="left:84px;top:561px;font-size:10.7px">Processed data</div><div class="a" style="left:11px;top:575px;width:786px;height:172px;background:#DCE8F8"></div><div class="a" style="left:13px;top:578px;width:782px;height:167px;border:1px solid #8CA8D0;background:#fff;overflow:hidden"></div><div class="a" style="left:14px;top:579px;width:80px;height:18px;background:linear-gradient(#F8FAFD,#EEF3FA 40%,#DFE7F4 50%,#D9E3F1);border-right:1px solid #D0D4DC;border-bottom:1px solid #C8CCD4"></div><div class="t" style="left:17px;top:583px;font-size:11.6px;font-weight:bold">Spectrum No</div><div class="a" style="left:94px;top:579px;width:80px;height:18px;background:linear-gradient(#F8FAFD,#EEF3FA 40%,#DFE7F4 50%,#D9E3F1);border-right:1px solid #D0D4DC;border-bottom:1px solid #C8CCD4"></div><div class="t" style="left:97px;top:583px;font-size:11.6px;font-weight:bold">Timestamp</div><div class="a" style="left:174px;top:579px;width:80px;height:18px;background:linear-gradient(#F8FAFD,#EEF3FA 40%,#DFE7F4 50%,#D9E3F1);border-right:1px solid #D0D4DC;border-bottom:1px solid #C8CCD4"></div><div class="t" style="left:177px;top:583px;font-size:11.6px;font-weight:bold">Spectrum</div><div class="a" style="left:254px;top:579px;width:80px;height:18px;background:linear-gradient(#F8FAFD,#EEF3FA 40%,#DFE7F4 50%,#D9E3F1);border-right:1px solid #D0D4DC;border-bottom:1px solid #C8CCD4"></div><div class="t" style="left:257px;top:583px;font-size:11.6px;font-weight:bold">Livetime</div><div class="a" style="left:334px;top:579px;width:80px;height:18px;background:linear-gradient(#F8FAFD,#EEF3FA 40%,#DFE7F4 50%,#D9E3F1);border-right:1px solid #D0D4DC;border-bottom:1px solid #C8CCD4"></div><div class="t" style="left:337px;top:583px;font-size:11.6px;font-weight:bold">Realtime</div><div class="a" style="left:414px;top:579px;width:80px;height:18px;background:linear-gradient(#F8FAFD,#EEF3FA 40%,#DFE7F4 50%,#D9E3F1);border-right:1px solid #D0D4DC;border-bottom:1px solid #C8CCD4"></div><div class="t" style="left:417px;top:583px;font-size:11.6px;font-weight:bold">Total</div><div class="a" style="left:494px;top:579px;width:80px;height:18px;background:linear-gradient(#F8FAFD,#EEF3FA 40%,#DFE7F4 50%,#D9E3F1);border-right:1px solid #D0D4DC;border-bottom:1px solid #C8CCD4"></div><div class="t" style="left:497px;top:583px;font-size:11.6px;font-weight:bold">Cosmics</div><div class="a" style="left:574px;top:579px;width:80px;height:18px;background:linear-gradient(#F8FAFD,#EEF3FA 40%,#DFE7F4 50%,#D9E3F1);border-right:1px solid #D0D4DC;border-bottom:1px solid #C8CCD4"></div><div class="t" style="left:577px;top:583px;font-size:11.6px;font-weight:bold">Stab</div><div class="a" style="left:14px;top:597px;width:80px;height:18px;background:linear-gradient(#F2F6FC,#E8EEF8 42%,#DCE6F4 50%,#D6E1F2);border-right:1px solid #C8D0DC;border-bottom:1px solid #D8D8D8;overflow:hidden"></div><div class="t" style="left:17px;top:603px;font-size:11.9px;font-weight:bold">70186</div><div class="a" style="left:94px;top:597px;width:80px;height:18px;border-right:1px solid #E4E4E4;border-bottom:1px solid #E4E4E4;background:#fff"></div><div class="a" style="left:94px;top:598px;width:79px;height:17px;border:1px solid #7FA0D0;border-radius:3px;background:linear-gradient(#EAF2FD,#C6DCF7)"></div><div class="t" style="left:97px;top:602px;font-size:11px">44955.595384</div><div class="a" style="left:174px;top:597px;width:80px;height:18px;border-right:1px solid #E4E4E4;border-bottom:1px solid #E4E4E4;background:#fff"></div><div class="t" style="left:177px;top:602px;font-size:11px">0.000000</div><div class="a" style="left:254px;top:597px;width:80px;height:18px;border-right:1px solid #E4E4E4;border-bottom:1px solid #E4E4E4;background:#fff"></div><div class="t" style="left:257px;top:602px;font-size:11px">0.198000</div><div class="a" style="left:334px;top:597px;width:80px;height:18px;border-right:1px solid #E4E4E4;border-bottom:1px solid #E4E4E4;background:#fff"></div><div class="t" style="left:337px;top:602px;font-size:11px">0.200000</div><div class="a" style="left:414px;top:597px;width:80px;height:18px;border-right:1px solid #E4E4E4;border-bottom:1px solid #E4E4E4;background:#fff"></div><div class="t" style="left:417px;top:602px;font-size:11px">170.000000</div><div class="a" style="left:494px;top:597px;width:80px;height:18px;border-right:1px solid #E4E4E4;border-bottom:1px solid #E4E4E4;background:#fff"></div><div class="t" style="left:497px;top:602px;font-size:11px">0.000000</div><div class="a" style="left:574px;top:597px;width:80px;height:18px;border-right:1px solid #E4E4E4;border-bottom:1px solid #E4E4E4;background:#fff"></div><div class="t" style="left:577px;top:602px;font-size:11px">0.704945</div><div class="a" style="left:14px;top:615px;width:80px;height:18px;background:linear-gradient(#F2F6FC,#E8EEF8 42%,#DCE6F4 50%,#D6E1F2);border-right:1px solid #C8D0DC;border-bottom:1px solid #D8D8D8;overflow:hidden"></div><div class="t" style="left:17px;top:621px;font-size:11.9px;font-weight:bold">70187</div><div class="a" style="left:94px;top:615px;width:80px;height:18px;border-right:1px solid #E4E4E4;border-bottom:1px solid #E4E4E4;background:#fff"></div><div class="a" style="left:94px;top:616px;width:79px;height:17px;border:1px solid #7FA0D0;border-radius:3px;background:linear-gradient(#EAF2FD,#C6DCF7)"></div><div class="t" style="left:97px;top:620px;font-size:11px">44955.595387</div><div class="a" style="left:174px;top:615px;width:80px;height:18px;border-right:1px solid #E4E4E4;border-bottom:1px solid #E4E4E4;background:#fff"></div><div class="t" style="left:177px;top:620px;font-size:11px">0.000000</div><div class="a" style="left:254px;top:615px;width:80px;height:18px;border-right:1px solid #E4E4E4;border-bottom:1px solid #E4E4E4;background:#fff"></div><div class="t" style="left:257px;top:620px;font-size:11px">0.198000</div><div class="a" style="left:334px;top:615px;width:80px;height:18px;border-right:1px solid #E4E4E4;border-bottom:1px solid #E4E4E4;background:#fff"></div><div class="t" style="left:337px;top:620px;font-size:11px">0.200000</div><div class="a" style="left:414px;top:615px;width:80px;height:18px;border-right:1px solid #E4E4E4;border-bottom:1px solid #E4E4E4;background:#fff"></div><div class="t" style="left:417px;top:620px;font-size:11px">179.000000</div><div class="a" style="left:494px;top:615px;width:80px;height:18px;border-right:1px solid #E4E4E4;border-bottom:1px solid #E4E4E4;background:#fff"></div><div class="t" style="left:497px;top:620px;font-size:11px">1.000000</div><div class="a" style="left:574px;top:615px;width:80px;height:18px;border-right:1px solid #E4E4E4;border-bottom:1px solid #E4E4E4;background:#fff"></div><div class="t" style="left:577px;top:620px;font-size:11px">0.704945</div><div class="a" style="left:14px;top:633px;width:80px;height:18px;background:linear-gradient(#F2F6FC,#E8EEF8 42%,#DCE6F4 50%,#D6E1F2);border-right:1px solid #C8D0DC;border-bottom:1px solid #D8D8D8;overflow:hidden"></div><div class="t" style="left:17px;top:639px;font-size:11.9px;font-weight:bold">70188</div><div class="a" style="left:94px;top:633px;width:80px;height:18px;border-right:1px solid #E4E4E4;border-bottom:1px solid #E4E4E4;background:#fff"></div><div class="a" style="left:94px;top:634px;width:79px;height:17px;border:1px solid #7FA0D0;border-radius:3px;background:linear-gradient(#EAF2FD,#C6DCF7)"></div><div class="t" style="left:97px;top:638px;font-size:11px">44955.595389</div><div class="a" style="left:174px;top:633px;width:80px;height:18px;border-right:1px solid #E4E4E4;border-bottom:1px solid #E4E4E4;background:#fff"></div><div class="t" style="left:177px;top:638px;font-size:11px">0.000000</div><div class="a" style="left:254px;top:633px;width:80px;height:18px;border-right:1px solid #E4E4E4;border-bottom:1px solid #E4E4E4;background:#fff"></div><div class="t" style="left:257px;top:638px;font-size:11px">0.197000</div><div class="a" style="left:334px;top:633px;width:80px;height:18px;border-right:1px solid #E4E4E4;border-bottom:1px solid #E4E4E4;background:#fff"></div><div class="t" style="left:337px;top:638px;font-size:11px">0.199000</div><div class="a" style="left:414px;top:633px;width:80px;height:18px;border-right:1px solid #E4E4E4;border-bottom:1px solid #E4E4E4;background:#fff"></div><div class="t" style="left:417px;top:638px;font-size:11px">157.000000</div><div class="a" style="left:494px;top:633px;width:80px;height:18px;border-right:1px solid #E4E4E4;border-bottom:1px solid #E4E4E4;background:#fff"></div><div class="t" style="left:497px;top:638px;font-size:11px">1.000000</div><div class="a" style="left:574px;top:633px;width:80px;height:18px;border-right:1px solid #E4E4E4;border-bottom:1px solid #E4E4E4;background:#fff"></div><div class="t" style="left:577px;top:638px;font-size:11px">0.704945</div><div class="a" style="left:14px;top:651px;width:80px;height:18px;background:linear-gradient(#F2F6FC,#E8EEF8 42%,#DCE6F4 50%,#D6E1F2);border-right:1px solid #C8D0DC;border-bottom:1px solid #D8D8D8;overflow:hidden"></div><div class="t" style="left:17px;top:657px;font-size:11.9px;font-weight:bold">70189</div><div class="a" style="left:94px;top:651px;width:80px;height:18px;border-right:1px solid #E4E4E4;border-bottom:1px solid #E4E4E4;background:#fff"></div><div class="a" style="left:94px;top:652px;width:79px;height:17px;border:1px solid #7FA0D0;border-radius:3px;background:linear-gradient(#EAF2FD,#C6DCF7)"></div><div class="t" style="left:97px;top:656px;font-size:11px">44955.595391</div><div class="a" style="left:174px;top:651px;width:80px;height:18px;border-right:1px solid #E4E4E4;border-bottom:1px solid #E4E4E4;background:#fff"></div><div class="t" style="left:177px;top:656px;font-size:11px">0.000000</div><div class="a" style="left:254px;top:651px;width:80px;height:18px;border-right:1px solid #E4E4E4;border-bottom:1px solid #E4E4E4;background:#fff"></div><div class="t" style="left:257px;top:656px;font-size:11px">0.198000</div><div class="a" style="left:334px;top:651px;width:80px;height:18px;border-right:1px solid #E4E4E4;border-bottom:1px solid #E4E4E4;background:#fff"></div><div class="t" style="left:337px;top:656px;font-size:11px">0.200000</div><div class="a" style="left:414px;top:651px;width:80px;height:18px;border-right:1px solid #E4E4E4;border-bottom:1px solid #E4E4E4;background:#fff"></div><div class="t" style="left:417px;top:656px;font-size:11px">158.000000</div><div class="a" style="left:494px;top:651px;width:80px;height:18px;border-right:1px solid #E4E4E4;border-bottom:1px solid #E4E4E4;background:#fff"></div><div class="t" style="left:497px;top:656px;font-size:11px">0.000000</div><div class="a" style="left:574px;top:651px;width:80px;height:18px;border-right:1px solid #E4E4E4;border-bottom:1px solid #E4E4E4;background:#fff"></div><div class="t" style="left:577px;top:656px;font-size:11px">0.704945</div><div class="a" style="left:14px;top:669px;width:80px;height:18px;background:linear-gradient(#F2F6FC,#E8EEF8 42%,#DCE6F4 50%,#D6E1F2);border-right:1px solid #C8D0DC;border-bottom:1px solid #D8D8D8;overflow:hidden"></div><div class="t" style="left:17px;top:675px;font-size:11.9px;font-weight:bold">70190</div><div class="a" style="left:94px;top:669px;width:80px;height:18px;border-right:1px solid #E4E4E4;border-bottom:1px solid #E4E4E4;background:#fff"></div><div class="a" style="left:94px;top:670px;width:79px;height:17px;border:1px solid #7FA0D0;border-radius:3px;background:linear-gradient(#EAF2FD,#C6DCF7)"></div><div class="t" style="left:97px;top:674px;font-size:11px">44955.595394</div><div class="a" style="left:174px;top:669px;width:80px;height:18px;border-right:1px solid #E4E4E4;border-bottom:1px solid #E4E4E4;background:#fff"></div><div class="t" style="left:177px;top:674px;font-size:11px">0.000000</div><div class="a" style="left:254px;top:669px;width:80px;height:18px;border-right:1px solid #E4E4E4;border-bottom:1px solid #E4E4E4;background:#fff"></div><div class="t" style="left:257px;top:674px;font-size:11px">0.201000</div><div class="a" style="left:334px;top:669px;width:80px;height:18px;border-right:1px solid #E4E4E4;border-bottom:1px solid #E4E4E4;background:#fff"></div><div class="t" style="left:337px;top:674px;font-size:11px">0.203000</div><div class="a" style="left:414px;top:669px;width:80px;height:18px;border-right:1px solid #E4E4E4;border-bottom:1px solid #E4E4E4;background:#fff"></div><div class="t" style="left:417px;top:674px;font-size:11px">155.000000</div><div class="a" style="left:494px;top:669px;width:80px;height:18px;border-right:1px solid #E4E4E4;border-bottom:1px solid #E4E4E4;background:#fff"></div><div class="t" style="left:497px;top:674px;font-size:11px">0.000000</div><div class="a" style="left:574px;top:669px;width:80px;height:18px;border-right:1px solid #E4E4E4;border-bottom:1px solid #E4E4E4;background:#fff"></div><div class="t" style="left:577px;top:674px;font-size:11px">0.704945</div><div class="a" style="left:14px;top:687px;width:80px;height:18px;background:linear-gradient(#F2F6FC,#E8EEF8 42%,#DCE6F4 50%,#D6E1F2);border-right:1px solid #C8D0DC;border-bottom:1px solid #D8D8D8;overflow:hidden"></div><div class="t" style="left:17px;top:693px;font-size:11.9px;font-weight:bold">70191</div><div class="a" style="left:94px;top:687px;width:80px;height:18px;border-right:1px solid #E4E4E4;border-bottom:1px solid #E4E4E4;background:#fff"></div><div class="a" style="left:94px;top:688px;width:79px;height:17px;border:1px solid #7FA0D0;border-radius:3px;background:linear-gradient(#EAF2FD,#C6DCF7)"></div><div class="t" style="left:97px;top:692px;font-size:11px">44955.595396</div><div class="a" style="left:174px;top:687px;width:80px;height:18px;border-right:1px solid #E4E4E4;border-bottom:1px solid #E4E4E4;background:#fff"></div><div class="t" style="left:177px;top:692px;font-size:11px">0.000000</div><div class="a" style="left:254px;top:687px;width:80px;height:18px;border-right:1px solid #E4E4E4;border-bottom:1px solid #E4E4E4;background:#fff"></div><div class="t" style="left:257px;top:692px;font-size:11px">0.196000</div><div class="a" style="left:334px;top:687px;width:80px;height:18px;border-right:1px solid #E4E4E4;border-bottom:1px solid #E4E4E4;background:#fff"></div><div class="t" style="left:337px;top:692px;font-size:11px">0.198000</div><div class="a" style="left:414px;top:687px;width:80px;height:18px;border-right:1px solid #E4E4E4;border-bottom:1px solid #E4E4E4;background:#fff"></div><div class="t" style="left:417px;top:692px;font-size:11px">172.000000</div><div class="a" style="left:494px;top:687px;width:80px;height:18px;border-right:1px solid #E4E4E4;border-bottom:1px solid #E4E4E4;background:#fff"></div><div class="t" style="left:497px;top:692px;font-size:11px">0.000000</div><div class="a" style="left:574px;top:687px;width:80px;height:18px;border-right:1px solid #E4E4E4;border-bottom:1px solid #E4E4E4;background:#fff"></div><div class="t" style="left:577px;top:692px;font-size:11px">0.704945</div><div class="a" style="left:14px;top:705px;width:80px;height:18px;background:linear-gradient(#F2F6FC,#E8EEF8 42%,#DCE6F4 50%,#D6E1F2);border-right:1px solid #C8D0DC;border-bottom:1px solid #D8D8D8;overflow:hidden"></div><div class="t" style="left:17px;top:711px;font-size:11.9px;font-weight:bold">70192</div><div class="a" style="left:94px;top:705px;width:80px;height:18px;border-right:1px solid #E4E4E4;border-bottom:1px solid #E4E4E4;background:#fff"></div><div class="t" style="left:97px;top:710px;font-size:11px">44955.595398</div><div class="a" style="left:174px;top:705px;width:80px;height:18px;border-right:1px solid #E4E4E4;border-bottom:1px solid #E4E4E4;background:#fff"></div><div class="t" style="left:177px;top:710px;font-size:11px">0.000000</div><div class="a" style="left:254px;top:705px;width:80px;height:18px;border-right:1px solid #E4E4E4;border-bottom:1px solid #E4E4E4;background:#fff"></div><div class="t" style="left:257px;top:710px;font-size:11px">0.198000</div><div class="a" style="left:334px;top:705px;width:80px;height:18px;border-right:1px solid #E4E4E4;border-bottom:1px solid #E4E4E4;background:#fff"></div><div class="t" style="left:337px;top:710px;font-size:11px">0.200000</div><div class="a" style="left:414px;top:705px;width:80px;height:18px;border-right:1px solid #E4E4E4;border-bottom:1px solid #E4E4E4;background:#fff"></div><div class="t" style="left:417px;top:710px;font-size:11px">166.000000</div><div class="a" style="left:494px;top:705px;width:80px;height:18px;border-right:1px solid #E4E4E4;border-bottom:1px solid #E4E4E4;background:#fff"></div><div class="t" style="left:497px;top:710px;font-size:11px">0.000000</div><div class="a" style="left:574px;top:705px;width:80px;height:18px;border-right:1px solid #E4E4E4;border-bottom:1px solid #E4E4E4;background:#fff"></div><div class="t" style="left:577px;top:710px;font-size:11px">0.704945</div><div class="a" style="left:14px;top:723px;width:80px;height:18px;background:linear-gradient(#F2F6FC,#E8EEF8 42%,#DCE6F4 50%,#D6E1F2);border-right:1px solid #C8D0DC;border-bottom:1px solid #D8D8D8;overflow:hidden"></div><div class="t" style="left:17px;top:729px;font-size:11.9px;font-weight:bold">70193</div><div class="a" style="left:94px;top:723px;width:80px;height:18px;border-right:1px solid #E4E4E4;border-bottom:1px solid #E4E4E4;background:#fff"></div><div class="t" style="left:97px;top:728px;font-size:11px">44955.595401</div><div class="a" style="left:174px;top:723px;width:80px;height:18px;border-right:1px solid #E4E4E4;border-bottom:1px solid #E4E4E4;background:#fff"></div><div class="t" style="left:177px;top:728px;font-size:11px">0.000000</div><div class="a" style="left:254px;top:723px;width:80px;height:18px;border-right:1px solid #E4E4E4;border-bottom:1px solid #E4E4E4;background:#fff"></div><div class="t" style="left:257px;top:728px;font-size:11px">0.198000</div><div class="a" style="left:334px;top:723px;width:80px;height:18px;border-right:1px solid #E4E4E4;border-bottom:1px solid #E4E4E4;background:#fff"></div><div class="t" style="left:337px;top:728px;font-size:11px">0.200000</div><div class="a" style="left:414px;top:723px;width:80px;height:18px;border-right:1px solid #E4E4E4;border-bottom:1px solid #E4E4E4;background:#fff"></div><div class="t" style="left:417px;top:728px;font-size:11px">150.000000</div><div class="a" style="left:494px;top:723px;width:80px;height:18px;border-right:1px solid #E4E4E4;border-bottom:1px solid #E4E4E4;background:#fff"></div><div class="t" style="left:497px;top:728px;font-size:11px">0.000000</div><div class="a" style="left:574px;top:723px;width:80px;height:18px;border-right:1px solid #E4E4E4;border-bottom:1px solid #E4E4E4;background:#fff"></div><div class="t" style="left:577px;top:728px;font-size:11px">0.704945</div><div class="a" style="left:14px;top:741px;width:80px;height:3px;background:linear-gradient(#F2F6FC,#E8EEF8 42%,#DCE6F4 50%,#D6E1F2);border-right:1px solid #C8D0DC;border-bottom:1px solid #D8D8D8;overflow:hidden"></div><div class="a" style="left:94px;top:741px;width:80px;height:3px;border-right:1px solid #E4E4E4;border-bottom:1px solid #E4E4E4;background:#fff"></div><div class="a" style="left:174px;top:741px;width:80px;height:3px;border-right:1px solid #E4E4E4;border-bottom:1px solid #E4E4E4;background:#fff"></div><div class="a" style="left:254px;top:741px;width:80px;height:3px;border-right:1px solid #E4E4E4;border-bottom:1px solid #E4E4E4;background:#fff"></div><div class="a" style="left:334px;top:741px;width:80px;height:3px;border-right:1px solid #E4E4E4;border-bottom:1px solid #E4E4E4;background:#fff"></div><div class="a" style="left:414px;top:741px;width:80px;height:3px;border-right:1px solid #E4E4E4;border-bottom:1px solid #E4E4E4;background:#fff"></div><div class="a" style="left:494px;top:741px;width:80px;height:3px;border-right:1px solid #E4E4E4;border-bottom:1px solid #E4E4E4;background:#fff"></div><div class="a" style="left:574px;top:741px;width:80px;height:3px;border-right:1px solid #E4E4E4;border-bottom:1px solid #E4E4E4;background:#fff"></div><div class="a" style="left:778px;top:579px;width:16px;height:165px;background:#F0F0F0"></div><div class="a" style="left:779px;top:625px;width:14px;height:17px;background:#CDCDCD"></div><svg class="a" style="left:781px;top:584px" width="10" height="8"><path d="M1,6 L5,2 L9,6" stroke="#606060" stroke-width="1.5" fill="none"/></svg><svg class="a" style="left:781px;top:731px" width="10" height="8"><path d="M1,2 L5,6 L9,2" stroke="#606060" stroke-width="1.5" fill="none"/></svg>

<div class="a" style="left:1px;top:747px;width:806px;height:1px;background:#90B0E0"></div>
<div class="a" style="left:1px;top:751px;width:806px;height:20px;background:linear-gradient(#4C7CCE 0px,#2A5CB8 4px,#1040A0 9px,#1040A0 18px,#003090 19px,#5A8AD8 20px)"></div>
<div class="a" style="left:1px;top:751px;width:281px;height:1px;background:#80A8E0"></div>
<div class="a" style="left:1px;top:752px;width:200px;height:19px;background:linear-gradient(#BCD6F6,#80A8E0 8px,#80A8E0 16px,#8AAEE4 17px)"></div>
<div class="a" style="left:201px;top:752px;width:1px;height:19px;background:#D8E6FA"></div>
<div class="a" style="left:202px;top:752px;width:79px;height:19px;background:linear-gradient(#BCD6F6,#80A8E0 8px,#80A8E0 16px,#8AAEE4 17px)"></div>
<div class="a" style="left:281px;top:752px;width:1px;height:19px;background:#fff"></div>
<div class="t" style="left:7px;top:755px;font-size:10.7px">Date: 29-1-2023 14:17:22</div>
<div class="t" style="left:206px;top:755px;font-size:11px">Data in Bq/kg</div>
<div class="t" style="left:534px;top:755px;font-size:11.5px;font-weight:bold;color:#fff">GAMMAN.</div>
<div class="t" style="left:606px;top:755px;font-size:11px;font-weight:bold;font-style:italic;color:#fff;letter-spacing:0.6px">When</div><div class="t" style="left:649px;top:755px;font-size:11px;font-weight:bold;font-style:italic;color:#fff;letter-spacing:0.6px">every</div><div class="t" style="left:691px;top:755px;font-size:11px;font-weight:bold;font-style:italic;color:#fff;letter-spacing:0.6px">count</div><div class="t" style="left:734px;top:755px;font-size:11px;font-weight:bold;font-style:italic;color:#fff;letter-spacing:0.4px">counts...</div>

<div class="a" style="left:802px;top:757px;width:2px;height:2px;background:#C0D4F0"></div><div class="a" style="left:798px;top:761px;width:2px;height:2px;background:#C0D4F0"></div><div class="a" style="left:802px;top:761px;width:2px;height:2px;background:#C0D4F0"></div><div class="a" style="left:794px;top:765px;width:2px;height:2px;background:#C0D4F0"></div><div class="a" style="left:798px;top:765px;width:2px;height:2px;background:#C0D4F0"></div><div class="a" style="left:802px;top:765px;width:2px;height:2px;background:#C0D4F0"></div>
</body></html>
